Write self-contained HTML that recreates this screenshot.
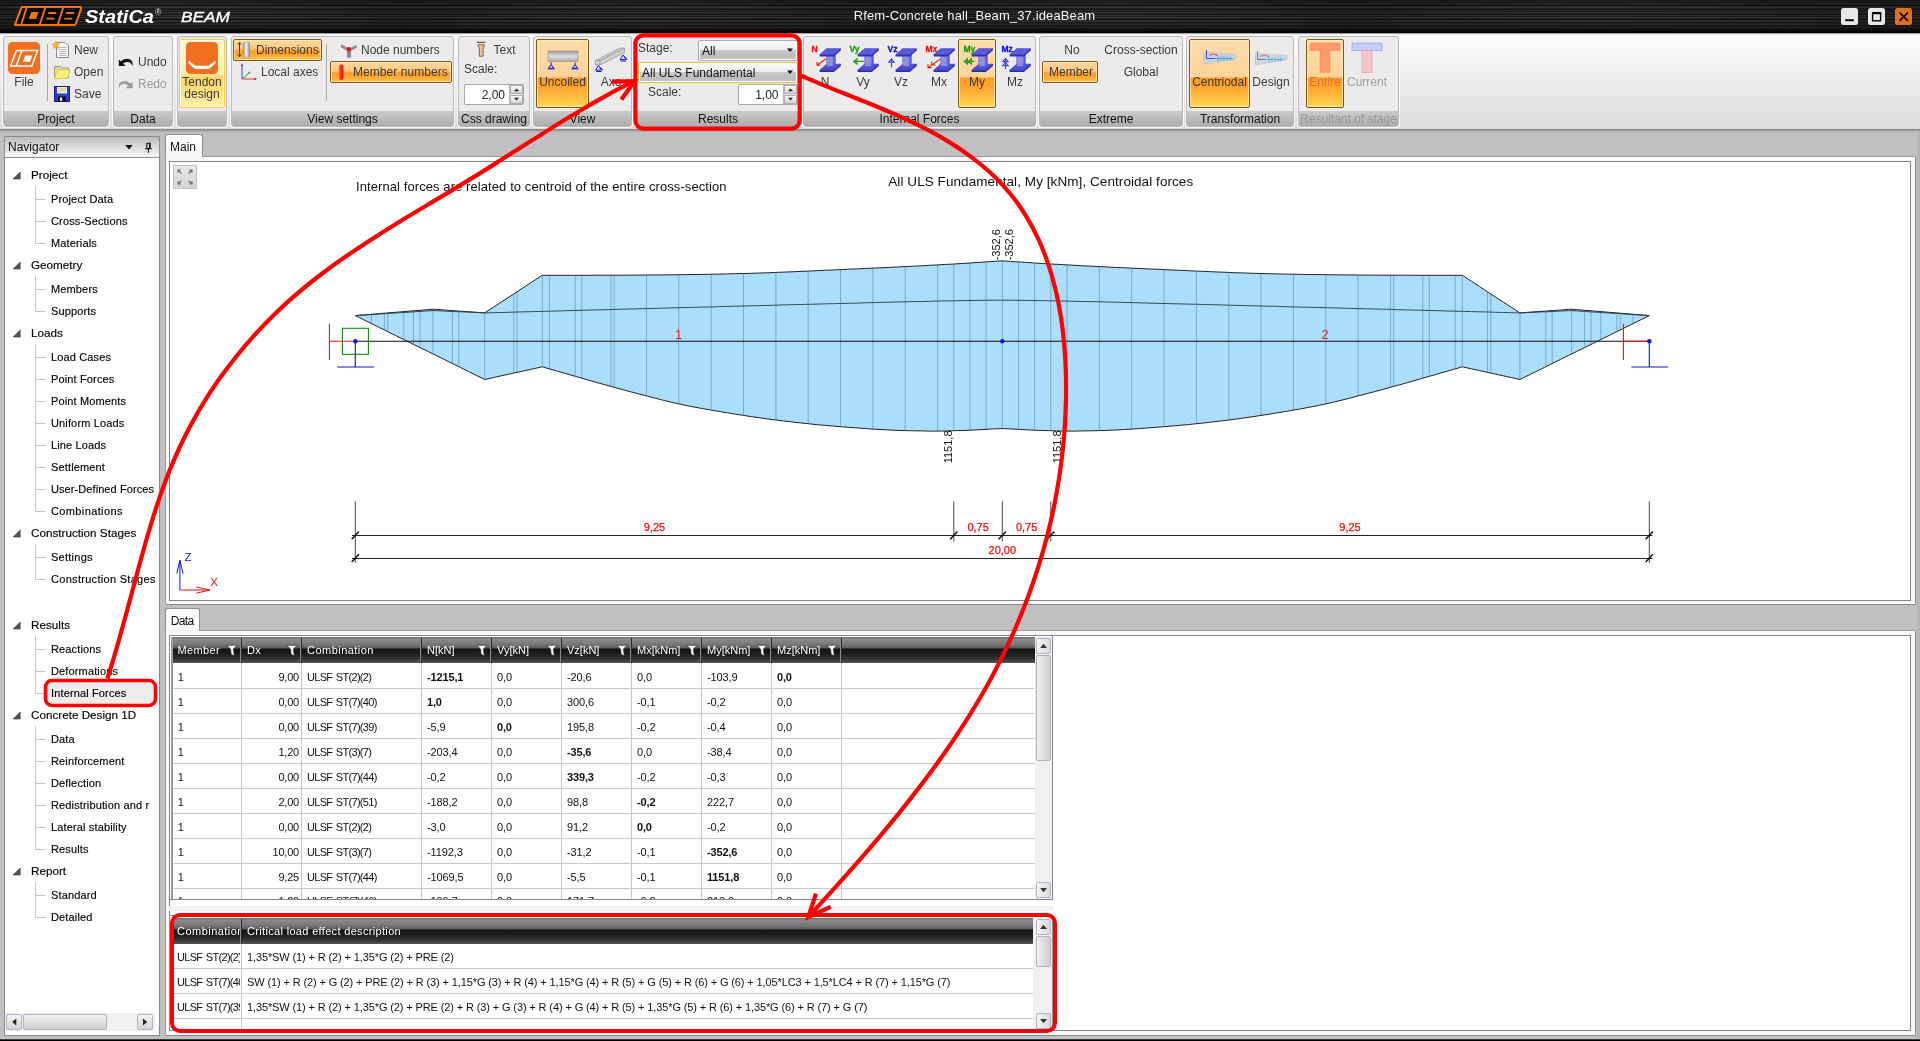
<!DOCTYPE html>
<html lang="en"><head><meta charset="utf-8"><title>IDEA StatiCa BEAM</title>
<style>
*{box-sizing:border-box;margin:0;padding:0}
html,body{width:1920px;height:1041px;overflow:hidden}
body{position:relative;will-change:transform;background:#c0c0c0;font-family:"Liberation Sans",sans-serif;font-size:12px;color:#1a1a1a;}
.abs{position:absolute}
.t{position:absolute;white-space:pre;line-height:14px}
#titlebar{left:0;top:0;width:1920px;height:33px;background:#0b0b0b;
 background-image:linear-gradient(90deg,rgba(0,0,0,.25) 0,rgba(0,0,0,0) 9%,rgba(0,0,0,.22) 21%,rgba(0,0,0,.04) 34%,rgba(0,0,0,.25) 47%,rgba(0,0,0,0) 58%,rgba(0,0,0,.22) 70%,rgba(0,0,0,.04) 83%,rgba(0,0,0,.25) 100%),linear-gradient(180deg,#1a1a1a 0px,#1a1a1a 1px,#282828 1px,#282828 2px,#141414 2px,#141414 3px,#303030 3px,#303030 4px,#1e1e1e 4px,#1e1e1e 5px,#121212 5px,#121212 6px,#2a2a2a 6px,#2a2a2a 7px,#383838 7px,#383838 8px,#202020 8px,#202020 9px,#141414 9px,#141414 10px,#2e2e2e 10px,#2e2e2e 11px,#1a1a1a 11px,#1a1a1a 12px,#363636 12px,#363636 13px,#242424 13px,#242424 14px,#161616 14px,#161616 15px,#323232 15px,#323232 16px,#1e1e1e 16px,#1e1e1e 17px,#3a3a3a 17px,#3a3a3a 18px,#222222 18px,#222222 19px,#141414 19px,#141414 20px,#282828 20px,#282828 21px,#343434 21px,#343434 22px,#181818 22px,#181818 23px,#242424 23px,#242424 24px,#2c2c2c 24px,#2c2c2c 25px,#161616 25px,#161616 26px,#1e1e1e 26px,#1e1e1e 27px,#262626 27px,#262626 28px,#121212 28px,#121212 29px,#161616 29px,#161616 30px,#0c0c0c 30px,#0c0c0c 31px,#060606 31px,#060606 32px,#020202 32px,#020202 33px);}
#ribbon{left:0;top:33px;width:1920px;height:97px;background:linear-gradient(180deg,#fdfdfd 0,#f3f3f3 30%,#dcdcdc 100%);border-top:1px solid #a4a4a4;box-shadow:inset 0 1px 0 #ececec;border-bottom:1px solid #888}
#ribshadow{left:0;top:130px;width:1920px;height:2px;background:linear-gradient(180deg,#989898,#b4b4b4)}
.grp{position:absolute;top:36px;height:91px;background:#eceaea;border:1px solid #b9b9b9;border-radius:3px;box-shadow:0 0 0 1px #fafafa;}
.grp .lbl{position:absolute;left:0;right:0;bottom:0;height:15px;background:linear-gradient(180deg,#cbcbcb,#adadad);text-align:center;line-height:16px;font-size:12px;color:#111;border-radius:0 0 2px 2px;white-space:nowrap}
.hot{position:absolute;border:1px solid #7a5a1c;border-radius:2px;background:linear-gradient(180deg,#ffd9a0 0,#ffcf8e 48%,#ff9a22 52%,#ffb437 75%,#ffd75a 100%);box-shadow:inset 0 0 0 1px rgba(255,240,190,.7)}
.hot2{position:absolute;border:1px solid #7a5a1c;border-radius:2px;background:linear-gradient(180deg,#ffd9a0 0,#ffc77d 45%,#ff9a22 55%,#ffa930 75%,#ffc24b 100%);box-shadow:inset 0 0 0 1px rgba(255,240,190,.7)}
</style></head>
<body>
<div id="titlebar" class="abs"></div>
<svg class="abs" style="left:0;top:0" width="260" height="33" viewBox="0 0 260 33">
<g fill="none" stroke="#f27405" stroke-width="2" stroke-linejoin="round">
<path d="M21.6 7.1 H80 Q81.6 7.1 81.1 8.7 L76 23.3 Q75.4 24.9 73.8 24.9 H15 Z" fill="#050505"/>
<path d="M26.7 7.5 L21.2 24.5 M45.3 7.5 L39.8 24.5 M63.2 7.5 L57.7 24.5" stroke-width="1.9"/>
<path d="M48.3 13 h8 M46.5 18.7 h8 M66.1 13 h8 M64.3 18.7 h8" stroke-width="1.8" stroke-linejoin="miter"/>
</g>
<path d="M31.2 12.1 h7.3 l-2.4 7 h-7.3z" fill="#f27405"/>
<text x="85" y="22.5" font-family="Liberation Sans,sans-serif" font-size="18.5" font-weight="bold" font-style="italic" fill="#fff" textLength="69" lengthAdjust="spacingAndGlyphs">StatiCa</text>
<text x="155" y="14.5" font-family="Liberation Sans,sans-serif" font-size="8.5" fill="#d8d8d8">®</text>
<text x="181" y="21.8" font-family="Liberation Sans,sans-serif" font-size="15.5" font-style="italic" fill="#fff" stroke="#fff" stroke-width=".35" textLength="49" lengthAdjust="spacingAndGlyphs">BEAM</text>
</svg>
<div class="t" style="left:853px;top:8.3px;width:243px;text-align:center;font-size:13px;line-height:16px;color:#f4f4f4;letter-spacing:.13px">Rfem-Concrete hall_Beam_37.ideaBeam</div>
<svg class="abs" style="left:1838px;top:5px" width="80" height="24" viewBox="0 0 80 24">
<rect x="3" y="3" width="17" height="17" rx="2.5" fill="#e8e8e8"/><rect x="7" y="14.3" width="9" height="1.9" rx=".9" fill="#000"/>
<rect x="30" y="3" width="17" height="17" rx="2.5" fill="#e8e8e8"/><rect x="34.6" y="7.8" width="8" height="8" fill="none" stroke="#000" stroke-width="1.4"/><rect x="34" y="7.2" width="9.2" height="2" fill="#000"/>
<rect x="57" y="3" width="17" height="17" rx="2.5" fill="#e36f1e"/><path d="M61.5 7.5 l8.4 8.4 M69.9 7.5 l-8.4 8.4" stroke="#000" stroke-width="1.7" fill="none"/>
</svg>
<div id="ribbon" class="abs"></div><div id="ribshadow" class="abs"></div>
<div class="grp" style="left:3px;width:106px"><div class="lbl" style="">Project</div></div>
<div class="grp" style="left:113px;width:60px"><div class="lbl" style="">Data</div></div>
<div class="grp" style="left:177px;width:50px"><div class="lbl" style=""></div></div>
<div class="grp" style="left:231px;width:223px"><div class="lbl" style="">View settings</div></div>
<div class="grp" style="left:458px;width:72px"><div class="lbl" style="">Css drawing</div></div>
<div class="grp" style="left:533px;width:99px"><div class="lbl" style="">View</div></div>
<div class="grp" style="left:636px;width:164px"><div class="lbl" style="">Results</div></div>
<div class="grp" style="left:803px;width:233px"><div class="lbl" style="">Internal Forces</div></div>
<div class="grp" style="left:1039px;width:144px"><div class="lbl" style="">Extreme</div></div>
<div class="grp" style="left:1186px;width:108px"><div class="lbl" style="">Transformation</div></div>
<div class="grp" style="left:1298px;width:101px"><div class="lbl" style="color:#999">Resultant of stage</div></div>
<div class="abs" style="left:179px;top:39px;width:46px;height:69px;border:1px solid #ffc845;border-radius:2px;background:linear-gradient(180deg,#fff7cf 0,#ffeeb0 50%,#ffd563 55%,#ffe07d 75%,#fff3a8 100%);box-shadow:inset 0 0 0 1px #fffbe6"></div>
<div class="hot" style="left:536px;top:39px;width:53px;height:69px;background:linear-gradient(180deg,#ffdcab 0,#ffd399 55%,#ff9a22 57%,#ffab32 75%,#ffd654 100%)"></div>
<div class="hot" style="left:958px;top:39px;width:38px;height:69px;background:linear-gradient(180deg,#ffdcab 0,#ffd399 55%,#ff9a22 57%,#ffab32 75%,#ffd654 100%)"></div>
<div class="hot" style="left:1189px;top:39px;width:61px;height:69px;background:linear-gradient(180deg,#ffdcab 0,#ffd399 55%,#ff9a22 57%,#ffab32 75%,#ffd654 100%)"></div>
<div class="hot" style="left:1306px;top:39px;width:38px;height:69px;background:linear-gradient(180deg,#ffdcab 0,#ffd399 55%,#ff9a22 57%,#ffab32 75%,#ffd654 100%)"></div>
<div class="hot2" style="left:233px;top:39px;width:89px;height:22px"></div>
<div class="hot2" style="left:330px;top:61px;width:122px;height:22px"></div>
<div class="hot2" style="left:1042px;top:61px;width:56px;height:22px"></div>
<div class="abs" style="left:47px;top:44px;width:1px;height:57px;background:#a9a9a9"></div>
<div class="abs" style="left:326px;top:44px;width:1px;height:57px;background:#a9a9a9"></div>
<svg class="abs" style="left:6px;top:40px" width="100" height="66" viewBox="6 40 100 66">
<rect x="8" y="42" width="32" height="32" rx="4.5" fill="#f26f21"/>
<g fill="none" stroke="#fff" stroke-width="1.5" stroke-linejoin="miter">
<path d="M16.4 50.6 H37.6 L31.8 66 H10.6 Z"/>
<path d="M21.9 50.6 L16.1 66"/>
</g>
<path d="M25.2 55.6 h7.2 l-2.4 6.2 h-7.2z" fill="#fff"/>
<!-- New -->
<path d="M56.5 42.5 h8.5 l3.5 3.5 v11.5 h-12z" fill="#fdfdfd" stroke="#8a8a8a" stroke-width="1"/>
<path d="M58.5 47.5h8M58.5 49.5h8M58.5 51.5h8M58.5 53.5h8M58.5 55.5h8" stroke="#b8b8b8" stroke-width="1"/>
<path d="M56 41 l1.2 2.6 2.8 .3 -2.1 1.9 .6 2.8 -2.5-1.5 -2.5 1.5 .6-2.8 -2.1-1.9 2.8-.3z" fill="#ffb52e" stroke="#e88a10" stroke-width=".5"/>
<!-- Open -->
<path d="M54.5 66.5 h6 l1.5 1.5 h6.5 v10 h-14z" fill="#d8d4b8" stroke="#a09a78" stroke-width="1"/>
<path d="M57 70 h13 l-2.5 8.5 h-13z" fill="#fff176" stroke="#d4c24a" stroke-width=".8"/>
<!-- Save -->
<rect x="54.5" y="86.5" width="15" height="15" fill="#2a3bd8" stroke="#1a1a8c" stroke-width="1"/>
<rect x="57" y="87" width="10" height="6.5" fill="#f4f0d0"/>
<path d="M58 89h8M58 91h8" stroke="#c9b458" stroke-width=".8"/>
<rect x="58" y="96.5" width="8" height="5" fill="#111"/><rect x="60" y="97.5" width="2.2" height="3.5" fill="#e8e8e8"/>
</svg>
<div class="t" style="left:-36.0px;top:75px;width:120px;text-align:center;color:#3a3a3a;">File</div>
<div class="t" style="left:74px;top:42.5px;color:#3a3a3a;">New</div>
<div class="t" style="left:74px;top:64.5px;color:#3a3a3a;">Open</div>
<div class="t" style="left:74px;top:86.5px;color:#3a3a3a;">Save</div>
<svg class="abs" style="left:116px;top:52px" width="22" height="42" viewBox="116 52 22 42">
<path d="M118.8 66 v-6.6 l2.1 1.9 c3.6-3.4 8.2-3.2 10.6-.6 c1.2 1.4 1.4 3.2 1 5.3 c-.8-2.6-2.6-4-5-4.100 c-1.700 0-3 .5-4.200 1.500 l2.300 2.600z" fill="#151515"/>
<path d="M132.600 88.200 v-6.600 l-2.100 1.900 c-3.600-3.400-8.200-3.200-10.600-.6 c-1.200 1.400-1.400 3.200-1 5.300 c.8-2.600 2.600-4 5-4.100 c1.700 0 3 .5 4.200 1.500 l-2.300 2.600z" fill="#9c9c9c"/>
</svg>
<div class="t" style="left:138px;top:54.5px;color:#3a3a3a;">Undo</div>
<div class="t" style="left:138px;top:76.5px;color:#9a9a9a;">Redo</div>
<svg class="abs" style="left:186px;top:42px" width="32" height="32" viewBox="0 0 32 32">
<rect x="0" y="0" width="32" height="32" rx="4.5" fill="#f26f21"/>
<path d="M2.5 18.5 L9.5 23.8 H22.5 L29.5 18.5 V21.5 L23 27 H9 L2.5 21.5Z" fill="#fff"/>
</svg>
<div class="t" style="left:142.0px;top:75px;width:120px;text-align:center;color:#3a3a3a;">Tendon</div>
<div class="t" style="left:142.0px;top:87px;width:120px;text-align:center;color:#3a3a3a;">design</div>
<svg class="abs" style="left:234px;top:40px" width="130" height="44" viewBox="234 40 130 44">
<defs><linearGradient id="cyl" x1="0" x2="1" y1="0" y2="0"><stop offset="0" stop-color="#9a9a9a"/><stop offset=".45" stop-color="#f4f4f4"/><stop offset="1" stop-color="#8a8a8a"/></linearGradient>
<linearGradient id="redcyl" x1="0" x2="1" y1="0" y2="0"><stop offset="0" stop-color="#ff6a5a"/><stop offset=".5" stop-color="#ff2a1a"/><stop offset="1" stop-color="#c81200"/></linearGradient></defs>
<path d="M239.5 42.5 v14 M237.8 44.5 l1.7-2.2 1.7 2.2 M237.8 54.5 l1.7 2.2 1.7-2.2" stroke="#333" stroke-width=".9" fill="none"/>
<rect x="243.3" y="42.3" width="6.4" height="15" rx="1.2" fill="url(#cyl)" stroke="#8c8c8c" stroke-width=".5"/>
<!-- local axes -->
<path d="M242 64.5 v14.5" stroke="#3a3af0" stroke-width="1"/><path d="M242 79 h14" stroke="#f03030" stroke-width="1"/><path d="M242 79 l7.5-6.5" stroke="#20a030" stroke-width="1"/>
<path d="M254.5 77.5 l2.6 1.5 -2.6 1.5z" fill="#f03030"/><path d="M240.8 66 l1.2-2.4 1.2 2.4z" fill="#3a3af0"/><path d="M248 72.3 l2.4-.8 -.8 2.4z" fill="#20a030"/>
<!-- node numbers -->
<path d="M341 44 l8 4.5 7.5-3.8 v3.2 l-5.5 2.8 v7 h-4 v-7 l-6-3.4z" fill="#8a8a9a"/>
<circle cx="348.8" cy="49.2" r="2.2" fill="#f01010"/>
<!-- member numbers -->
<rect x="338.8" y="64.5" width="4.6" height="15.5" rx="2.2" fill="url(#redcyl)"/>
</svg>
<div class="t" style="left:256px;top:42.5px;color:#3a3a3a;">Dimensions</div>
<div class="t" style="left:261px;top:64.5px;color:#3a3a3a;">Local axes</div>
<div class="t" style="left:361px;top:42.5px;color:#3a3a3a;">Node numbers</div>
<div class="t" style="left:353px;top:64.5px;color:#3a3a3a;letter-spacing:.05px;">Member numbers</div>
<svg class="abs" style="left:474px;top:40px" width="16" height="20" viewBox="474 40 16 20">
<path d="M477 42.3 h8.4" stroke="#333" stroke-width="1"/>
<path d="M478 44.8 h6.4 v1.6 l-1.3 1 v8.8 h-3.8 v-8.8 l-1.3-1z" fill="#f2c88a" stroke="#5a4a30" stroke-width=".8"/>
</svg>
<div class="t" style="left:493.5px;top:42.5px;color:#3a3a3a;">Text</div>
<div class="t" style="left:464px;top:62px;color:#3a3a3a;">Scale:</div>
<div class="abs" style="left:464px;top:83.5px;width:60px;height:21px;background:#fff;border:1px solid #a8a8a8;border-radius:2px"></div>
<div class="abs" style="left:509px;top:84.5px;width:14px;height:19px;background:#e9e9e9;border-left:1px solid #b8b8b8"></div>
<div class="abs" style="left:510px;top:84.5px;width:13px;height:9px;background:linear-gradient(180deg,#fafafa,#d2d2d2);border:1px solid #b0b0b0"></div>
<div class="abs" style="left:510px;top:94.5px;width:13px;height:9px;background:linear-gradient(180deg,#fafafa,#d2d2d2);border:1px solid #b0b0b0"></div>
<svg class="abs" style="left:510px;top:84.5px" width="13" height="19" viewBox="0 0 13 19"><path d="M4 6.2 l2.5-2.6 2.5 2.6z M4 12.8 l2.5 2.6 2.5-2.6z" fill="#222"/></svg>
<div class="t" style="left:464px;top:87.5px;width:41px;text-align:right;color:#222">2,00</div>
<svg class="abs" style="left:540px;top:44px" width="92" height="32" viewBox="540 44 92 32">
<defs><linearGradient id="bm" x1="0" x2="0" y1="0" y2="1"><stop offset="0" stop-color="#9c9c9c"/><stop offset=".5" stop-color="#dedede"/><stop offset="1" stop-color="#a8a8a8"/></linearGradient></defs>
<rect x="548" y="51" width="30" height="10.5" fill="url(#bm)" stroke="#8a8a8a" stroke-width=".6"/>
<g fill="none" stroke="#1818e8" stroke-width="1"><path d="M551.2 62.5 v2.2 l-2.7 3.4 h5.4 l-2.7-3.4 M547.8 68.9 h6.9"/><path d="M575 62.5 v2.2 l-2.7 3.4 h5.4 l-2.7-3.4 M571.6 68.9 h6.9"/></g>
<path d="M595.5 60.5 l24.5-12.5 h4.5 v4.5 l-24.5 12.5 h-4.5z" fill="#d0d0d0" stroke="#8e8e8e" stroke-width=".7"/>
<path d="M595.5 60.5 h4.5 l24.5-12.5 M600 60.5 v4.5" fill="none" stroke="#8e8e8e" stroke-width=".7"/>
<g fill="none" stroke="#1818e8" stroke-width="1"><path d="M598.5 65.5 l-3 4.6 h6z M596 71.5 h5.6 M599.5 67 l3.5 3"/><path d="M623 55 l-3 4.6 h6z M620.5 61 h5.6 M624 56.5 l3.5 3"/></g>
</svg>
<div class="t" style="left:502.5px;top:75px;width:120px;text-align:center;color:#3a3a3a;">Uncoiled</div>
<div class="t" style="left:551.0px;top:75px;width:120px;text-align:center;color:#3a3a3a;">Axo</div>
<div class="t" style="left:638px;top:41px;color:#3a3a3a;">Stage:</div>
<div class="abs" style="left:698px;top:39.5px;width:99.5px;height:21px;border:1px solid #a8a8a8;border-radius:2px;background:linear-gradient(180deg,#fafafa 0,#ededed 45%,#c9c9c9 50%,#bdbdbd 80%,#c8c8c8 100%);box-shadow:inset 0 0 0 1px #fff"></div>
<svg class="abs" style="left:785.5px;top:47.5px" width="8" height="5" viewBox="0 0 8 5"><path d="M1 .5 h6 l-3 3.6z" fill="#111"/></svg>
<div class="t" style="left:702px;top:43.5px;color:#111">All</div>
<div class="abs" style="left:638px;top:61.5px;width:159.5px;height:21px;border:1px solid #f5bf2a;border-radius:2px;background:linear-gradient(180deg,#fafafa 0,#ededed 45%,#c9c9c9 50%,#bdbdbd 80%,#c8c8c8 100%);box-shadow:inset 0 0 0 1px #fff"></div>
<svg class="abs" style="left:785.5px;top:69.5px" width="8" height="5" viewBox="0 0 8 5"><path d="M1 .5 h6 l-3 3.6z" fill="#111"/></svg>
<div class="t" style="left:642px;top:65.5px;color:#111">All ULS Fundamental</div>
<div class="t" style="left:648px;top:85px;color:#3a3a3a;">Scale:</div>
<div class="abs" style="left:738px;top:83.5px;width:59.5px;height:21px;background:#fff;border:1px solid #a8a8a8;border-radius:2px"></div>
<div class="abs" style="left:782.5px;top:84.5px;width:14px;height:19px;background:#e9e9e9;border-left:1px solid #b8b8b8"></div>
<div class="abs" style="left:783.5px;top:84.5px;width:13px;height:9px;background:linear-gradient(180deg,#fafafa,#d2d2d2);border:1px solid #b0b0b0"></div>
<div class="abs" style="left:783.5px;top:94.5px;width:13px;height:9px;background:linear-gradient(180deg,#fafafa,#d2d2d2);border:1px solid #b0b0b0"></div>
<svg class="abs" style="left:783.5px;top:84.5px" width="13" height="19" viewBox="0 0 13 19"><path d="M4 6.2 l2.5-2.6 2.5 2.6z M4 12.8 l2.5 2.6 2.5-2.6z" fill="#222"/></svg>
<div class="t" style="left:738px;top:87.5px;width:40.5px;text-align:right;color:#222">1,00</div>
<svg class="abs" style="left:803px;top:39px" width="233" height="40" viewBox="803 39 233 40"><path d="M826.7 64.2 h14.1 l-7 6 h-14.1z" fill="#4e4ed6" stroke="#2222a8" stroke-width=".6"/><path d="M819.7 70.2 h14.1 l7-6 v1.8 l-7 6 h-14.1z" fill="#2a2ab0"/><path d="M826.7 55.5 h6.6 v11 h-6.6z" fill="#9090e0" stroke="#4a4ac8" stroke-width=".5"/><path d="M833.3 55.5 l2.4-2 v11 l-2.4 2z" fill="#5c5cd0"/><path d="M826.7 48.7 h14.1 l-7 6 h-14.1z" fill="#5a5ade" stroke="#2a2ab4" stroke-width=".6"/><path d="M819.7 54.7 h14.1 l7-6 v1.8 l-7 6 h-14.1z" fill="#2e2eb8"/><path d="M864.7 64.2 h14.1 l-7 6 h-14.1z" fill="#4e4ed6" stroke="#2222a8" stroke-width=".6"/><path d="M857.7 70.2 h14.1 l7-6 v1.8 l-7 6 h-14.1z" fill="#2a2ab0"/><path d="M864.7 55.5 h6.6 v11 h-6.6z" fill="#9090e0" stroke="#4a4ac8" stroke-width=".5"/><path d="M871.3 55.5 l2.4-2 v11 l-2.4 2z" fill="#5c5cd0"/><path d="M864.7 48.7 h14.1 l-7 6 h-14.1z" fill="#5a5ade" stroke="#2a2ab4" stroke-width=".6"/><path d="M857.7 54.7 h14.1 l7-6 v1.8 l-7 6 h-14.1z" fill="#2e2eb8"/><path d="M902.7 64.2 h14.1 l-7 6 h-14.1z" fill="#4e4ed6" stroke="#2222a8" stroke-width=".6"/><path d="M895.7 70.2 h14.1 l7-6 v1.8 l-7 6 h-14.1z" fill="#2a2ab0"/><path d="M902.7 55.5 h6.6 v11 h-6.6z" fill="#9090e0" stroke="#4a4ac8" stroke-width=".5"/><path d="M909.3 55.5 l2.4-2 v11 l-2.4 2z" fill="#5c5cd0"/><path d="M902.7 48.7 h14.1 l-7 6 h-14.1z" fill="#5a5ade" stroke="#2a2ab4" stroke-width=".6"/><path d="M895.7 54.7 h14.1 l7-6 v1.8 l-7 6 h-14.1z" fill="#2e2eb8"/><path d="M940.7 64.2 h14.1 l-7 6 h-14.1z" fill="#4e4ed6" stroke="#2222a8" stroke-width=".6"/><path d="M933.7 70.2 h14.1 l7-6 v1.8 l-7 6 h-14.1z" fill="#2a2ab0"/><path d="M940.7 55.5 h6.6 v11 h-6.6z" fill="#9090e0" stroke="#4a4ac8" stroke-width=".5"/><path d="M947.3 55.5 l2.4-2 v11 l-2.4 2z" fill="#5c5cd0"/><path d="M940.7 48.7 h14.1 l-7 6 h-14.1z" fill="#5a5ade" stroke="#2a2ab4" stroke-width=".6"/><path d="M933.7 54.7 h14.1 l7-6 v1.8 l-7 6 h-14.1z" fill="#2e2eb8"/><path d="M978.7 64.2 h14.1 l-7 6 h-14.1z" fill="#4e4ed6" stroke="#2222a8" stroke-width=".6"/><path d="M971.7 70.2 h14.1 l7-6 v1.8 l-7 6 h-14.1z" fill="#2a2ab0"/><path d="M978.7 55.5 h6.6 v11 h-6.6z" fill="#9090e0" stroke="#4a4ac8" stroke-width=".5"/><path d="M985.3 55.5 l2.4-2 v11 l-2.4 2z" fill="#5c5cd0"/><path d="M978.7 48.7 h14.1 l-7 6 h-14.1z" fill="#5a5ade" stroke="#2a2ab4" stroke-width=".6"/><path d="M971.7 54.7 h14.1 l7-6 v1.8 l-7 6 h-14.1z" fill="#2e2eb8"/><path d="M1016.7 64.2 h14.1 l-7 6 h-14.1z" fill="#4e4ed6" stroke="#2222a8" stroke-width=".6"/><path d="M1009.7 70.2 h14.1 l7-6 v1.8 l-7 6 h-14.1z" fill="#2a2ab0"/><path d="M1016.7 55.5 h6.6 v11 h-6.6z" fill="#9090e0" stroke="#4a4ac8" stroke-width=".5"/><path d="M1023.3 55.5 l2.4-2 v11 l-2.4 2z" fill="#5c5cd0"/><path d="M1016.7 48.7 h14.1 l-7 6 h-14.1z" fill="#5a5ade" stroke="#2a2ab4" stroke-width=".6"/><path d="M1009.7 54.7 h14.1 l7-6 v1.8 l-7 6 h-14.1z" fill="#2e2eb8"/><g fill="none" stroke-width="1.1"><path d="M826 58.8 l-9 6.5 M817 62 v3.3 h3.6" stroke="#f01818"/><path d="M864 61.4 h-10.5 M857 58.7 l-3.4 2.7 3.4 2.7z" stroke="#18a018"/><path d="M891.5 67.5 v-8.5 M888.8 62.2 l2.7-3.3 2.7 3.3z" stroke="#4040f0"/><path d="M940 59.2 l-12 8.4 M928 64.2 v3.4 h3.6 M931.8 61.6 v3.4 h3.6" stroke="#f01818"/><path d="M974.5 61.4 h-11 M967.5 58.7 l-3.3 2.7 3.3 2.7z M971.5 58.7 l-3.3 2.7 3.3 2.7z" stroke="#18a018"/><path d="M1005.5 69 v-10.5 M1002.8 61.6 l2.7-3.3 2.7 3.3z M1002.8 65.6 l2.7-3.3 2.7 3.3z" stroke="#4040f0"/></g><text x="811.5" y="51.5" font-family="Liberation Sans,sans-serif" font-size="8.5" font-weight="bold" fill="#f01010" stroke="#f01010" stroke-width=".3">N</text><text x="849.5" y="51.5" font-family="Liberation Sans,sans-serif" font-size="8.5" font-weight="bold" fill="#10a010" stroke="#10a010" stroke-width=".3">Vy</text><text x="887.5" y="51.5" font-family="Liberation Sans,sans-serif" font-size="8.5" font-weight="bold" fill="#1010f0" stroke="#1010f0" stroke-width=".3">Vz</text><text x="925.5" y="51.5" font-family="Liberation Sans,sans-serif" font-size="8.5" font-weight="bold" fill="#f01010" stroke="#f01010" stroke-width=".3">Mx</text><text x="963.5" y="51.5" font-family="Liberation Sans,sans-serif" font-size="8.5" font-weight="bold" fill="#10a010" stroke="#10a010" stroke-width=".3">My</text><text x="1001.5" y="51.5" font-family="Liberation Sans,sans-serif" font-size="8.5" font-weight="bold" fill="#1010f0" stroke="#1010f0" stroke-width=".3">Mz</text></svg>
<div class="t" style="left:795.0px;top:75px;width:60px;text-align:center;color:#3a3a3a;">N</div>
<div class="t" style="left:833.0px;top:75px;width:60px;text-align:center;color:#3a3a3a;">Vy</div>
<div class="t" style="left:871.0px;top:75px;width:60px;text-align:center;color:#3a3a3a;">Vz</div>
<div class="t" style="left:909.0px;top:75px;width:60px;text-align:center;color:#3a3a3a;">Mx</div>
<div class="t" style="left:947.0px;top:75px;width:60px;text-align:center;color:#3a3a3a;">My</div>
<div class="t" style="left:985.0px;top:75px;width:60px;text-align:center;color:#3a3a3a;">Mz</div>
<div class="t" style="left:1012.0px;top:42.5px;width:120px;text-align:center;color:#3a3a3a;">No</div>
<div class="t" style="left:1011.0px;top:64.5px;width:120px;text-align:center;color:#3a3a3a;">Member</div>
<div class="t" style="left:1081.0px;top:42.5px;width:120px;text-align:center;color:#3a3a3a;">Cross-section</div>
<div class="t" style="left:1081.0px;top:64.5px;width:120px;text-align:center;color:#3a3a3a;">Global</div>
<svg class="abs" style="left:1186px;top:39px" width="108" height="40" viewBox="1186 39 108 40"><g opacity="1"><path d="M1204 52 l32 2.5 v4.5 l-32 5z" fill="#c8d4dc" stroke="#a8b4bc" stroke-width=".5"/><path d="M1207 58.5 h26" stroke="#28b8e8" stroke-width="1"/><path d="M1206.5 50 v8.5 h8" stroke="#4040f0" stroke-width=".9" fill="none"/><path d="M1209 55.5 q4-3 9 0" stroke="#f03030" stroke-width=".9" fill="none"/><path d="M1218 55.5 v6 M1221 55.8 v5.4 M1224 56 v5 M1227 56.2 v4.4 M1230 56.5 v3.8" stroke="#6a8ad8" stroke-width=".8"/></g><g opacity="0.8"><path d="M1255 53 l32 2.5 v4.5 l-32 5z" fill="#c8d4dc" stroke="#a8b4bc" stroke-width=".5"/><path d="M1258 59.5 h26" stroke="#28b8e8" stroke-width="1"/><path d="M1257.5 51 v8.5 h8" stroke="#4040f0" stroke-width=".9" fill="none"/><path d="M1260 56.5 q4-3 9 0" stroke="#f03030" stroke-width=".9" fill="none"/><path d="M1269 56.5 v6 M1272 56.8 v5.4 M1275 57 v5 M1278 57.2 v4.4 M1281 57.5 v3.8" stroke="#6a8ad8" stroke-width=".8"/></g></svg>
<div class="t" style="left:1184.5px;top:75px;width:70px;text-align:center;color:#3a3a3a;">Centriodal</div>
<div class="t" style="left:1241.0px;top:75px;width:60px;text-align:center;color:#3a3a3a;">Design</div>
<svg class="abs" style="left:1300px;top:39px" width="96" height="40" viewBox="1300 39 96 40">
<rect x="1310" y="43" width="30" height="7.5" fill="#ff9a6a" stroke="#ff8a5a" stroke-width=".6"/><rect x="1320" y="50.5" width="10" height="22" fill="#ff9a6a" stroke="#ff8a5a" stroke-width=".6"/>
<path d="M1325 43 v29.5" stroke="#ffb898" stroke-width=".6" stroke-dasharray="1 1"/>
<rect x="1352" y="43" width="30" height="7.5" fill="#c6cef6" stroke="#9aa8f0" stroke-width=".8"/><rect x="1362" y="50.5" width="10" height="22" fill="#f6c6cc" stroke="#f0a0aa" stroke-width=".8"/>
<path d="M1367 43 v29.5" stroke="#f0a0aa" stroke-width=".6" stroke-dasharray="1 1"/>
</svg>
<div class="t" style="left:1295.0px;top:75px;width:60px;text-align:center;color:#d9762e;">Entire</div>
<div class="t" style="left:1337.0px;top:75px;width:60px;text-align:center;color:#a0a0a0;">Current</div>
<div class="abs" style="left:4px;top:136px;width:156px;height:900px;background:#fff;border:1px solid #8c8c8c"></div>
<div class="abs" style="left:5px;top:137px;width:154px;height:21px;background:linear-gradient(180deg,#bcbcbc 0,#dcdcdc 50%,#f6f6f6 100%);border-bottom:1px solid #8c8c8c"></div>
<div class="t" style="left:8px;top:139.5px;color:#111">Navigator</div>
<svg class="abs" style="left:120px;top:138px" width="38" height="18" viewBox="120 138 38 18"><path d="M125.3 145 h7.4 l-3.7 4.4z" fill="#111"/><path d="M146.8 143.3 h3.4 v5.2 h-3.4z M149.6 143.3 v5.2 M145 148.8 h6.8 M148.4 148.8 v4" stroke="#111" stroke-width="1.1" fill="none"/></svg>
<div class="abs" style="left:46px;top:681px;width:108px;height:23px;background:#ededed"></div>
<svg class="abs" style="left:5px;top:158px" width="154" height="780" viewBox="5 158 154 780"><path d="M35.5 186 V243.5" stroke="#c4c4c4" stroke-width="1" fill="none"/><path d="M13.2 179 h7 v-7z" fill="#555" stroke="#333" stroke-width=".6"/><path d="M35.5 276 V311.5" stroke="#c4c4c4" stroke-width="1" fill="none"/><path d="M13.2 269 h7 v-7z" fill="#555" stroke="#333" stroke-width=".6"/><path d="M35.5 344 V511.5" stroke="#c4c4c4" stroke-width="1" fill="none"/><path d="M13.2 337 h7 v-7z" fill="#555" stroke="#333" stroke-width=".6"/><path d="M35.5 544 V579.5" stroke="#c4c4c4" stroke-width="1" fill="none"/><path d="M13.2 537 h7 v-7z" fill="#555" stroke="#333" stroke-width=".6"/><path d="M35.5 636 V693.5" stroke="#c4c4c4" stroke-width="1" fill="none"/><path d="M13.2 629 h7 v-7z" fill="#555" stroke="#333" stroke-width=".6"/><path d="M35.5 726 V849.5" stroke="#c4c4c4" stroke-width="1" fill="none"/><path d="M13.2 719 h7 v-7z" fill="#555" stroke="#333" stroke-width=".6"/><path d="M35.5 882 V917.5" stroke="#c4c4c4" stroke-width="1" fill="none"/><path d="M13.2 875 h7 v-7z" fill="#555" stroke="#333" stroke-width=".6"/><path d="M35.5 199.5 H46" stroke="#c4c4c4" stroke-width="1" fill="none"/><path d="M35.5 221.5 H46" stroke="#c4c4c4" stroke-width="1" fill="none"/><path d="M35.5 243.5 H46" stroke="#c4c4c4" stroke-width="1" fill="none"/><path d="M35.5 289.5 H46" stroke="#c4c4c4" stroke-width="1" fill="none"/><path d="M35.5 311.5 H46" stroke="#c4c4c4" stroke-width="1" fill="none"/><path d="M35.5 357.5 H46" stroke="#c4c4c4" stroke-width="1" fill="none"/><path d="M35.5 379.5 H46" stroke="#c4c4c4" stroke-width="1" fill="none"/><path d="M35.5 401.5 H46" stroke="#c4c4c4" stroke-width="1" fill="none"/><path d="M35.5 423.5 H46" stroke="#c4c4c4" stroke-width="1" fill="none"/><path d="M35.5 445.5 H46" stroke="#c4c4c4" stroke-width="1" fill="none"/><path d="M35.5 467.5 H46" stroke="#c4c4c4" stroke-width="1" fill="none"/><path d="M35.5 489.5 H46" stroke="#c4c4c4" stroke-width="1" fill="none"/><path d="M35.5 511.5 H46" stroke="#c4c4c4" stroke-width="1" fill="none"/><path d="M35.5 557.5 H46" stroke="#c4c4c4" stroke-width="1" fill="none"/><path d="M35.5 579.5 H46" stroke="#c4c4c4" stroke-width="1" fill="none"/><path d="M35.5 649.5 H46" stroke="#c4c4c4" stroke-width="1" fill="none"/><path d="M35.5 671.5 H46" stroke="#c4c4c4" stroke-width="1" fill="none"/><path d="M35.5 693.5 H46" stroke="#c4c4c4" stroke-width="1" fill="none"/><path d="M35.5 739.5 H46" stroke="#c4c4c4" stroke-width="1" fill="none"/><path d="M35.5 761.5 H46" stroke="#c4c4c4" stroke-width="1" fill="none"/><path d="M35.5 783.5 H46" stroke="#c4c4c4" stroke-width="1" fill="none"/><path d="M35.5 805.5 H46" stroke="#c4c4c4" stroke-width="1" fill="none"/><path d="M35.5 827.5 H46" stroke="#c4c4c4" stroke-width="1" fill="none"/><path d="M35.5 849.5 H46" stroke="#c4c4c4" stroke-width="1" fill="none"/><path d="M35.5 895.5 H46" stroke="#c4c4c4" stroke-width="1" fill="none"/><path d="M35.5 917.5 H46" stroke="#c4c4c4" stroke-width="1" fill="none"/></svg>
<div class="t" style="left:31px;top:168px;color:#000;font-size:11.7px;width:125px;overflow:hidden;-webkit-text-stroke:.15px #000">Project</div>
<div class="t" style="left:51px;top:192px;color:#000;font-size:11px;letter-spacing:0.14px;width:103.5px;overflow:hidden;-webkit-text-stroke:.15px #000">Project Data</div>
<div class="t" style="left:51px;top:214px;color:#000;font-size:11px;letter-spacing:0.14px;width:103.5px;overflow:hidden;-webkit-text-stroke:.15px #000">Cross-Sections</div>
<div class="t" style="left:51px;top:236px;color:#000;font-size:11px;letter-spacing:0.14px;width:103.5px;overflow:hidden;-webkit-text-stroke:.15px #000">Materials</div>
<div class="t" style="left:31px;top:258px;color:#000;font-size:11.7px;width:125px;overflow:hidden;-webkit-text-stroke:.15px #000">Geometry</div>
<div class="t" style="left:51px;top:282px;color:#000;font-size:11px;letter-spacing:0.14px;width:103.5px;overflow:hidden;-webkit-text-stroke:.15px #000">Members</div>
<div class="t" style="left:51px;top:304px;color:#000;font-size:11px;letter-spacing:0.14px;width:103.5px;overflow:hidden;-webkit-text-stroke:.15px #000">Supports</div>
<div class="t" style="left:31px;top:326px;color:#000;font-size:11.7px;width:125px;overflow:hidden;-webkit-text-stroke:.15px #000">Loads</div>
<div class="t" style="left:51px;top:350px;color:#000;font-size:11px;letter-spacing:0.14px;width:103.5px;overflow:hidden;-webkit-text-stroke:.15px #000">Load Cases</div>
<div class="t" style="left:51px;top:372px;color:#000;font-size:11px;letter-spacing:0.14px;width:103.5px;overflow:hidden;-webkit-text-stroke:.15px #000">Point Forces</div>
<div class="t" style="left:51px;top:394px;color:#000;font-size:11px;letter-spacing:0.14px;width:103.5px;overflow:hidden;-webkit-text-stroke:.15px #000">Point Moments</div>
<div class="t" style="left:51px;top:416px;color:#000;font-size:11px;letter-spacing:0.14px;width:103.5px;overflow:hidden;-webkit-text-stroke:.15px #000">Uniform Loads</div>
<div class="t" style="left:51px;top:438px;color:#000;font-size:11px;letter-spacing:0.14px;width:103.5px;overflow:hidden;-webkit-text-stroke:.15px #000">Line Loads</div>
<div class="t" style="left:51px;top:460px;color:#000;font-size:11px;letter-spacing:0.14px;width:103.5px;overflow:hidden;-webkit-text-stroke:.15px #000">Settlement</div>
<div class="t" style="left:51px;top:482px;color:#000;font-size:11px;letter-spacing:0.08px;width:103.5px;overflow:hidden;-webkit-text-stroke:.15px #000">User-Defined Forces</div>
<div class="t" style="left:51px;top:504px;color:#000;font-size:11px;letter-spacing:0.38px;width:103.5px;overflow:hidden;-webkit-text-stroke:.15px #000">Combinations</div>
<div class="t" style="left:31px;top:526px;color:#000;font-size:11.7px;width:125px;overflow:hidden;-webkit-text-stroke:.15px #000">Construction Stages</div>
<div class="t" style="left:51px;top:550px;color:#000;font-size:11px;letter-spacing:0.25px;width:103.5px;overflow:hidden;-webkit-text-stroke:.15px #000">Settings</div>
<div class="t" style="left:51px;top:572px;color:#000;font-size:11px;letter-spacing:0.3px;width:103.5px;overflow:hidden;-webkit-text-stroke:.15px #000">Construction Stages</div>
<div class="t" style="left:31px;top:618px;color:#000;font-size:11.7px;width:125px;overflow:hidden;-webkit-text-stroke:.15px #000">Results</div>
<div class="t" style="left:51px;top:642px;color:#000;font-size:11px;letter-spacing:0.14px;width:103.5px;overflow:hidden;-webkit-text-stroke:.15px #000">Reactions</div>
<div class="t" style="left:51px;top:664px;color:#000;font-size:11px;letter-spacing:0.14px;width:103.5px;overflow:hidden;-webkit-text-stroke:.15px #000">Deformations</div>
<div class="t" style="left:51px;top:686px;color:#000;font-size:11px;letter-spacing:0.14px;width:103.5px;overflow:hidden;-webkit-text-stroke:.15px #000">Internal Forces</div>
<div class="t" style="left:31px;top:708px;color:#000;font-size:11.7px;width:125px;overflow:hidden;-webkit-text-stroke:.15px #000">Concrete Design 1D</div>
<div class="t" style="left:51px;top:732px;color:#000;font-size:11px;letter-spacing:0.14px;width:103.5px;overflow:hidden;-webkit-text-stroke:.15px #000">Data</div>
<div class="t" style="left:51px;top:754px;color:#000;font-size:11px;letter-spacing:0.14px;width:103.5px;overflow:hidden;-webkit-text-stroke:.15px #000">Reinforcement</div>
<div class="t" style="left:51px;top:776px;color:#000;font-size:11px;letter-spacing:0.14px;width:103.5px;overflow:hidden;-webkit-text-stroke:.15px #000">Deflection</div>
<div class="t" style="left:51px;top:798px;color:#000;font-size:11px;letter-spacing:0.14px;width:103.5px;overflow:hidden;-webkit-text-stroke:.15px #000">Redistribution and r</div>
<div class="t" style="left:51px;top:820px;color:#000;font-size:11px;letter-spacing:0.14px;width:103.5px;overflow:hidden;-webkit-text-stroke:.15px #000">Lateral stability</div>
<div class="t" style="left:51px;top:842px;color:#000;font-size:11px;letter-spacing:0.14px;width:103.5px;overflow:hidden;-webkit-text-stroke:.15px #000">Results</div>
<div class="t" style="left:31px;top:864px;color:#000;font-size:11.7px;width:125px;overflow:hidden;-webkit-text-stroke:.15px #000">Report</div>
<div class="t" style="left:51px;top:888px;color:#000;font-size:11px;letter-spacing:0.14px;width:103.5px;overflow:hidden;-webkit-text-stroke:.15px #000">Standard</div>
<div class="t" style="left:51px;top:910px;color:#000;font-size:11px;letter-spacing:0.14px;width:103.5px;overflow:hidden;-webkit-text-stroke:.15px #000">Detailed</div>
<div class="abs" style="left:5px;top:1013px;width:150px;height:18px;background:#f0f0f0"></div>
<div class="abs" style="left:6px;top:1014px;width:16px;height:16px;background:linear-gradient(180deg,#f4f4f4,#d4d4d4);border:1px solid #a9b6c8;border-radius:2px"></div>
<div class="abs" style="left:137px;top:1014px;width:16px;height:16px;background:linear-gradient(180deg,#f4f4f4,#d4d4d4);border:1px solid #a9b6c8;border-radius:2px"></div>
<div class="abs" style="left:23px;top:1014px;width:84px;height:16px;background:linear-gradient(180deg,#f2f2f2,#d0d0d0);border:1px solid #b0b4ba;border-radius:2px"></div>
<svg class="abs" style="left:6px;top:1014px" width="148" height="16" viewBox="6 1014 148 16"><path d="M16.3 1018.5 v7 l-4.2-3.5z M143 1018.5 v7 l4.2-3.5z" fill="#222"/></svg>
<div class="abs" style="left:165px;top:134px;width:38px;height:23px;background:linear-gradient(180deg,#fff,#f6f6f6);border:1px solid #8e8e8e;border-bottom:none;border-radius:3px 3px 0 0"></div>
<div class="t" style="left:170px;top:139.5px;color:#111">Main</div>
<div class="abs" style="left:165px;top:156px;width:1751px;height:449px;background:#f8f8f8;border:1px solid #8a8a8a;border-top-color:#9a9a9a;border-left-color:#9c9c9c;border-radius:0 2px 2px 2px"></div>
<div class="abs" style="left:166px;top:156px;width:36px;height:2px;background:#f8f8f8"></div>
<div class="abs" style="left:169px;top:161px;width:1742px;height:440px;background:#fff;border:1px solid #868686"></div>
<div class="abs" style="left:173px;top:165px;width:24px;height:24px;background:linear-gradient(180deg,#e8e8e8,#d4d4d4);border:1px solid #c0c0c0"></div>
<svg class="abs" style="left:173px;top:165px" width="24" height="24" viewBox="0 0 24 24"><g stroke="#707070" stroke-width="1.1" fill="none"><path d="M5 5 l3.5 3.5 M5 8 v-3 h3 M19 5 l-3.5 3.5 M16 5 h3 v3 M5 19 l3.5-3.5 M5 16 v3 h3 M19 19 l-3.5-3.5 M19 16 v3 h-3"/></g></svg>
<div class="t" style="left:356px;top:178.6px;font-size:13px;line-height:16px;color:#111;letter-spacing:.085px">Internal forces are related to centroid of the entire cross-section</div>
<div class="t" style="left:888.3px;top:174.2px;font-size:13.5px;line-height:16px;color:#111;letter-spacing:.07px">All ULS Fundamental, My [kNm], Centroidal forces</div>
<svg class="abs" style="left:170px;top:162px" width="1741" height="438" viewBox="170 162 1741 438" font-family="Liberation Sans,sans-serif"><polygon points="355.3,315.6 363.4,314.9 371.5,314.3 379.6,313.6 384.4,313.2 387.7,312.9 395.7,312.3 403.8,311.6 411.9,310.9 413.5,310.8 420.0,310.3 428.1,309.6 432.9,309.2 436.2,309.4 444.3,310.0 452.4,310.6 458.8,311.1 460.4,311.2 468.5,311.7 476.6,312.3 484.7,312.9 492.8,307.6 500.9,302.3 509.0,297.1 513.8,293.9 517.0,291.8 525.1,286.5 533.2,281.2 541.3,275.9 542.3,275.3 549.4,275.3 557.5,275.3 565.6,275.3 573.7,275.3 575.3,275.3 581.8,275.3 589.8,275.3 597.9,275.2 606.0,275.2 610.9,275.2 614.1,275.2 622.2,275.2 630.3,275.1 638.4,275.1 646.5,275.0 654.5,274.9 662.6,274.9 670.7,274.8 678.8,274.7 686.9,274.6 695.0,274.5 703.1,274.4 711.2,274.2 719.2,274.1 727.3,273.9 735.4,273.7 743.5,273.5 751.6,273.3 759.7,273.0 767.8,272.8 775.9,272.4 783.9,272.1 792.0,271.8 800.1,271.4 808.2,271.1 816.3,270.7 824.4,270.3 832.5,270.0 840.5,269.6 848.6,269.2 856.7,268.9 864.8,268.5 872.9,268.1 881.0,267.8 889.1,267.4 897.2,267.0 905.2,266.6 913.3,266.2 921.4,265.8 929.5,265.3 937.6,264.9 945.7,264.4 953.8,264.0 961.9,263.5 970.0,263.0 978.0,262.4 986.1,261.9 994.2,261.4 1002.3,260.8 1010.4,261.4 1018.5,261.9 1026.6,262.4 1034.6,263.0 1042.7,263.5 1050.8,264.0 1058.9,264.4 1067.0,264.9 1075.1,265.3 1083.2,265.8 1091.3,266.2 1099.3,266.6 1107.4,267.0 1115.5,267.4 1123.6,267.8 1131.7,268.1 1139.8,268.5 1147.9,268.9 1156.0,269.2 1164.0,269.6 1172.1,270.0 1180.2,270.3 1188.3,270.7 1196.4,271.1 1204.5,271.4 1212.6,271.8 1220.7,272.1 1228.8,272.4 1236.8,272.8 1244.9,273.0 1253.0,273.3 1261.1,273.5 1269.2,273.7 1277.3,273.9 1285.4,274.1 1293.4,274.2 1301.5,274.4 1309.6,274.5 1317.7,274.6 1325.8,274.7 1333.9,274.8 1342.0,274.9 1350.1,274.9 1358.1,275.0 1366.2,275.1 1374.3,275.1 1382.4,275.2 1390.5,275.2 1393.7,275.2 1398.6,275.2 1406.7,275.2 1414.8,275.3 1422.8,275.3 1429.3,275.3 1430.9,275.3 1439.0,275.3 1447.1,275.3 1455.2,275.3 1462.3,275.3 1463.3,275.9 1471.4,281.2 1479.5,286.5 1487.5,291.8 1490.8,293.9 1495.6,297.1 1503.7,302.3 1511.8,307.6 1519.9,312.9 1528.0,312.3 1536.1,311.7 1544.2,311.2 1545.8,311.1 1552.2,310.6 1560.3,310.0 1568.4,309.4 1571.7,309.2 1576.5,309.6 1584.6,310.3 1591.1,310.8 1592.7,310.9 1600.8,311.6 1608.9,312.3 1616.9,312.9 1620.2,313.2 1625.0,313.6 1633.1,314.3 1641.2,314.9 1649.3,315.6 1649.3,315.6 1641.2,319.6 1633.1,323.6 1625.0,327.6 1620.2,330.0 1616.9,331.6 1608.9,335.6 1600.8,339.6 1592.7,343.6 1591.1,344.4 1584.6,347.6 1576.5,351.5 1571.7,353.9 1568.4,355.5 1560.3,359.5 1552.2,363.5 1545.8,366.7 1544.2,367.5 1536.1,371.5 1528.0,375.5 1519.9,379.5 1511.8,377.7 1503.7,375.9 1495.6,374.1 1490.8,373.1 1487.5,372.4 1479.5,370.6 1471.4,368.8 1463.3,367.0 1462.3,366.8 1455.2,368.9 1447.1,371.2 1439.0,373.5 1430.9,375.9 1429.3,376.3 1422.8,378.2 1414.8,380.5 1406.7,382.8 1398.6,385.1 1393.7,386.4 1390.5,387.3 1382.4,389.5 1374.3,391.7 1366.2,393.8 1358.1,395.9 1350.1,398.0 1342.0,400.1 1333.9,402.1 1325.8,403.9 1317.7,405.6 1309.6,407.2 1301.5,408.7 1293.4,410.1 1285.4,411.5 1277.3,412.8 1269.2,414.2 1261.1,415.4 1253.0,416.7 1244.9,417.8 1236.8,419.0 1228.8,420.0 1220.7,421.0 1212.6,421.9 1204.5,422.9 1196.4,423.7 1188.3,424.6 1180.2,425.3 1172.1,426.0 1164.0,426.7 1156.0,427.3 1147.9,427.9 1139.8,428.5 1131.7,429.1 1123.6,429.6 1115.5,430.0 1107.4,430.4 1099.3,430.6 1091.3,430.8 1083.2,430.9 1075.1,431.1 1067.0,431.1 1058.9,431.0 1050.8,430.7 1042.7,430.5 1034.6,430.2 1026.6,429.8 1018.5,429.3 1010.4,428.9 1002.3,428.6 994.2,428.9 986.1,429.3 978.0,429.8 970.0,430.2 961.9,430.5 953.8,430.7 945.7,431.0 937.6,431.1 929.5,431.1 921.4,430.9 913.3,430.8 905.2,430.6 897.2,430.4 889.1,430.0 881.0,429.6 872.9,429.1 864.8,428.5 856.7,427.9 848.6,427.3 840.5,426.7 832.5,426.0 824.4,425.3 816.3,424.6 808.2,423.7 800.1,422.9 792.0,421.9 783.9,421.0 775.9,420.0 767.8,419.0 759.7,417.8 751.6,416.7 743.5,415.4 735.4,414.2 727.3,412.8 719.2,411.5 711.2,410.1 703.1,408.7 695.0,407.2 686.9,405.6 678.8,403.9 670.7,402.1 662.6,400.1 654.5,398.0 646.5,395.9 638.4,393.8 630.3,391.7 622.2,389.5 614.1,387.3 610.9,386.4 606.0,385.1 597.9,382.8 589.8,380.5 581.8,378.2 575.3,376.3 573.7,375.9 565.6,373.5 557.5,371.2 549.4,368.9 542.3,366.8 541.3,367.0 533.2,368.8 525.1,370.6 517.0,372.4 513.8,373.1 509.0,374.1 500.9,375.9 492.8,377.7 484.7,379.5 476.6,375.5 468.5,371.5 460.4,367.5 458.8,366.7 452.4,363.5 444.3,359.5 436.2,355.5 432.9,353.9 428.1,351.5 420.0,347.6 413.5,344.4 411.9,343.6 403.8,339.6 395.7,335.6 387.7,331.6 384.4,330.0 379.6,327.6 371.5,323.6 363.4,319.6 355.3,315.6" fill="#abdefc" stroke="none"/><path d="M371.5 314.3V323.6M1633.1 314.3V323.6M384.4 313.2V330.0M1620.2 313.2V330.0M387.7 312.9V331.6M1616.9 312.9V331.6M403.8 311.6V339.6M1600.8 311.6V339.6M413.5 310.8V344.4M1591.1 310.8V344.4M420.0 310.3V347.6M1584.6 310.3V347.6M432.9 309.2V353.9M1571.7 309.2V353.9M452.4 310.6V363.5M1552.2 310.6V363.5M458.8 311.1V366.7M1545.8 311.1V366.7M484.7 312.9V379.5M1519.9 312.9V379.5M513.8 293.9V373.1M1490.8 293.9V373.1M517.0 291.8V372.4M1487.5 291.8V372.4M542.3 275.3V366.8M1462.3 275.3V366.8M549.4 275.3V368.9M1455.2 275.3V368.9M575.3 275.3V376.3M1429.3 275.3V376.3M581.8 275.3V378.2M1422.8 275.3V378.2M610.9 275.2V386.4M1393.7 275.2V386.4M614.1 275.2V387.3M1390.5 275.2V387.3M646.5 275.0V395.9M1358.1 275.0V395.9M678.8 274.7V403.9M1325.8 274.7V403.9M711.2 274.2V410.1M1293.4 274.2V410.1M743.5 273.5V415.4M1261.1 273.5V415.4M775.9 272.4V420.0M1228.8 272.4V420.0M808.2 271.1V423.7M1196.4 271.1V423.7M840.5 269.6V426.7M1164.0 269.6V426.7M872.9 268.1V429.1M1131.7 268.1V429.1M905.2 266.6V430.6M1099.3 266.6V430.6M937.6 264.9V431.1M1067.0 264.9V431.1M953.8 264.0V430.7M1050.8 264.0V430.7M970.0 263.0V430.2M1034.6 263.0V430.2M986.1 261.9V429.3M1018.5 261.9V429.3M1002.3 260.8V428.6" stroke="#6f9dbd" stroke-width=".8" fill="none"/><polyline points="355.3,315.6 363.4,314.9 371.5,314.3 379.6,313.6 384.4,313.2 387.7,312.9 395.7,312.3 403.8,311.6 411.9,310.9 413.5,310.8 420.0,310.3 428.1,309.6 432.9,309.2 436.2,309.4 444.3,310.0 452.4,310.6 458.8,311.1 460.4,311.2 468.5,311.7 476.6,312.3 484.7,312.9 492.8,307.6 500.9,302.3 509.0,297.1 513.8,293.9 517.0,291.8 525.1,286.5 533.2,281.2 541.3,275.9 542.3,275.3 549.4,275.3 557.5,275.3 565.6,275.3 573.7,275.3 575.3,275.3 581.8,275.3 589.8,275.3 597.9,275.2 606.0,275.2 610.9,275.2 614.1,275.2 622.2,275.2 630.3,275.1 638.4,275.1 646.5,275.0 654.5,274.9 662.6,274.9 670.7,274.8 678.8,274.7 686.9,274.6 695.0,274.5 703.1,274.4 711.2,274.2 719.2,274.1 727.3,273.9 735.4,273.7 743.5,273.5 751.6,273.3 759.7,273.0 767.8,272.8 775.9,272.4 783.9,272.1 792.0,271.8 800.1,271.4 808.2,271.1 816.3,270.7 824.4,270.3 832.5,270.0 840.5,269.6 848.6,269.2 856.7,268.9 864.8,268.5 872.9,268.1 881.0,267.8 889.1,267.4 897.2,267.0 905.2,266.6 913.3,266.2 921.4,265.8 929.5,265.3 937.6,264.9 945.7,264.4 953.8,264.0 961.9,263.5 970.0,263.0 978.0,262.4 986.1,261.9 994.2,261.4 1002.3,260.8 1010.4,261.4 1018.5,261.9 1026.6,262.4 1034.6,263.0 1042.7,263.5 1050.8,264.0 1058.9,264.4 1067.0,264.9 1075.1,265.3 1083.2,265.8 1091.3,266.2 1099.3,266.6 1107.4,267.0 1115.5,267.4 1123.6,267.8 1131.7,268.1 1139.8,268.5 1147.9,268.9 1156.0,269.2 1164.0,269.6 1172.1,270.0 1180.2,270.3 1188.3,270.7 1196.4,271.1 1204.5,271.4 1212.6,271.8 1220.7,272.1 1228.8,272.4 1236.8,272.8 1244.9,273.0 1253.0,273.3 1261.1,273.5 1269.2,273.7 1277.3,273.9 1285.4,274.1 1293.4,274.2 1301.5,274.4 1309.6,274.5 1317.7,274.6 1325.8,274.7 1333.9,274.8 1342.0,274.9 1350.1,274.9 1358.1,275.0 1366.2,275.1 1374.3,275.1 1382.4,275.2 1390.5,275.2 1393.7,275.2 1398.6,275.2 1406.7,275.2 1414.8,275.3 1422.8,275.3 1429.3,275.3 1430.9,275.3 1439.0,275.3 1447.1,275.3 1455.2,275.3 1462.3,275.3 1463.3,275.9 1471.4,281.2 1479.5,286.5 1487.5,291.8 1490.8,293.9 1495.6,297.1 1503.7,302.3 1511.8,307.6 1519.9,312.9 1528.0,312.3 1536.1,311.7 1544.2,311.2 1545.8,311.1 1552.2,310.6 1560.3,310.0 1568.4,309.4 1571.7,309.2 1576.5,309.6 1584.6,310.3 1591.1,310.8 1592.7,310.9 1600.8,311.6 1608.9,312.3 1616.9,312.9 1620.2,313.2 1625.0,313.6 1633.1,314.3 1641.2,314.9 1649.3,315.6" fill="none" stroke="#222" stroke-width="1"/><polyline points="355.3,315.6 363.4,319.6 371.5,323.6 379.6,327.6 384.4,330.0 387.7,331.6 395.7,335.6 403.8,339.6 411.9,343.6 413.5,344.4 420.0,347.6 428.1,351.5 432.9,353.9 436.2,355.5 444.3,359.5 452.4,363.5 458.8,366.7 460.4,367.5 468.5,371.5 476.6,375.5 484.7,379.5 492.8,377.7 500.9,375.9 509.0,374.1 513.8,373.1 517.0,372.4 525.1,370.6 533.2,368.8 541.3,367.0 542.3,366.8 549.4,368.9 557.5,371.2 565.6,373.5 573.7,375.9 575.3,376.3 581.8,378.2 589.8,380.5 597.9,382.8 606.0,385.1 610.9,386.4 614.1,387.3 622.2,389.5 630.3,391.7 638.4,393.8 646.5,395.9 654.5,398.0 662.6,400.1 670.7,402.1 678.8,403.9 686.9,405.6 695.0,407.2 703.1,408.7 711.2,410.1 719.2,411.5 727.3,412.8 735.4,414.2 743.5,415.4 751.6,416.7 759.7,417.8 767.8,419.0 775.9,420.0 783.9,421.0 792.0,421.9 800.1,422.9 808.2,423.7 816.3,424.6 824.4,425.3 832.5,426.0 840.5,426.7 848.6,427.3 856.7,427.9 864.8,428.5 872.9,429.1 881.0,429.6 889.1,430.0 897.2,430.4 905.2,430.6 913.3,430.8 921.4,430.9 929.5,431.1 937.6,431.1 945.7,431.0 953.8,430.7 961.9,430.5 970.0,430.2 978.0,429.8 986.1,429.3 994.2,428.9 1002.3,428.6 1010.4,428.9 1018.5,429.3 1026.6,429.8 1034.6,430.2 1042.7,430.5 1050.8,430.7 1058.9,431.0 1067.0,431.1 1075.1,431.1 1083.2,430.9 1091.3,430.8 1099.3,430.6 1107.4,430.4 1115.5,430.0 1123.6,429.6 1131.7,429.1 1139.8,428.5 1147.9,427.9 1156.0,427.3 1164.0,426.7 1172.1,426.0 1180.2,425.3 1188.3,424.6 1196.4,423.7 1204.5,422.9 1212.6,421.9 1220.7,421.0 1228.8,420.0 1236.8,419.0 1244.9,417.8 1253.0,416.7 1261.1,415.4 1269.2,414.2 1277.3,412.8 1285.4,411.5 1293.4,410.1 1301.5,408.7 1309.6,407.2 1317.7,405.6 1325.8,403.9 1333.9,402.1 1342.0,400.1 1350.1,398.0 1358.1,395.9 1366.2,393.8 1374.3,391.7 1382.4,389.5 1390.5,387.3 1393.7,386.4 1398.6,385.1 1406.7,382.8 1414.8,380.5 1422.8,378.2 1429.3,376.3 1430.9,375.9 1439.0,373.5 1447.1,371.2 1455.2,368.9 1462.3,366.8 1463.3,367.0 1471.4,368.8 1479.5,370.6 1487.5,372.4 1490.8,373.1 1495.6,374.1 1503.7,375.9 1511.8,377.7 1519.9,379.5 1528.0,375.5 1536.1,371.5 1544.2,367.5 1545.8,366.7 1552.2,363.5 1560.3,359.5 1568.4,355.5 1571.7,353.9 1576.5,351.5 1584.6,347.6 1591.1,344.4 1592.7,343.6 1600.8,339.6 1608.9,335.6 1616.9,331.6 1620.2,330.0 1625.0,327.6 1633.1,323.6 1641.2,319.6 1649.3,315.6" fill="none" stroke="#222" stroke-width="1"/><polyline points="355.3,315.6 363.4,315.1 371.5,314.6 379.6,314.0 384.4,313.7 387.7,313.5 395.7,313.0 403.8,312.5 411.9,312.0 413.5,311.9 420.0,311.4 428.1,310.9 432.9,310.6 436.2,310.7 444.3,311.1 452.4,311.5 458.8,311.8 460.4,311.8 468.5,312.2 476.6,312.5 484.7,312.9 492.8,312.7 500.9,312.5 509.0,312.3 513.8,312.1 517.0,312.0 525.1,311.8 533.2,311.6 541.3,311.4 542.3,311.4 549.4,311.2 557.5,311.0 565.6,310.7 573.7,310.5 575.3,310.5 581.8,310.3 589.8,310.1 597.9,309.9 606.0,309.7 610.9,309.5 614.1,309.4 622.2,309.2 630.3,309.0 638.4,308.8 646.5,308.6 654.5,308.4 662.6,308.2 670.7,307.9 678.8,307.7 686.9,307.5 695.0,307.3 703.1,307.1 711.2,306.9 719.2,306.7 727.3,306.4 735.4,306.2 743.5,306.0 751.6,305.8 759.7,305.6 767.8,305.4 775.9,305.2 783.9,304.9 792.0,304.7 800.1,304.5 808.2,304.3 816.3,304.1 824.4,303.9 832.5,303.7 840.5,303.5 848.6,303.3 856.7,303.1 864.8,302.8 872.9,302.6 881.0,302.4 889.1,302.2 897.2,302.0 905.2,301.8 913.3,301.6 921.4,301.5 929.5,301.3 937.6,301.1 945.7,300.9 953.8,300.8 961.9,300.6 970.0,300.5 978.0,300.4 986.1,300.3 994.2,300.2 1002.3,300.2 1010.4,300.2 1018.5,300.3 1026.6,300.4 1034.6,300.5 1042.7,300.6 1050.8,300.8 1058.9,300.9 1067.0,301.1 1075.1,301.3 1083.2,301.5 1091.3,301.6 1099.3,301.8 1107.4,302.0 1115.5,302.2 1123.6,302.4 1131.7,302.6 1139.8,302.8 1147.9,303.1 1156.0,303.3 1164.0,303.5 1172.1,303.7 1180.2,303.9 1188.3,304.1 1196.4,304.3 1204.5,304.5 1212.6,304.7 1220.7,304.9 1228.8,305.2 1236.8,305.4 1244.9,305.6 1253.0,305.8 1261.1,306.0 1269.2,306.2 1277.3,306.4 1285.4,306.7 1293.4,306.9 1301.5,307.1 1309.6,307.3 1317.7,307.5 1325.8,307.7 1333.9,307.9 1342.0,308.2 1350.1,308.4 1358.1,308.6 1366.2,308.8 1374.3,309.0 1382.4,309.2 1390.5,309.4 1393.7,309.5 1398.6,309.7 1406.7,309.9 1414.8,310.1 1422.8,310.3 1429.3,310.5 1430.9,310.5 1439.0,310.7 1447.1,311.0 1455.2,311.2 1462.3,311.4 1463.3,311.4 1471.4,311.6 1479.5,311.8 1487.5,312.0 1490.8,312.1 1495.6,312.3 1503.7,312.5 1511.8,312.7 1519.9,312.9 1528.0,312.5 1536.1,312.2 1544.2,311.8 1545.8,311.8 1552.2,311.5 1560.3,311.1 1568.4,310.7 1571.7,310.6 1576.5,310.9 1584.6,311.4 1591.1,311.9 1592.7,312.0 1600.8,312.5 1608.9,313.0 1616.9,313.5 1620.2,313.7 1625.0,314.0 1633.1,314.6 1641.2,315.1 1649.3,315.6" fill="none" stroke="#2a3a44" stroke-width=".9"/><path d="M355.3 341.2 H1649.3" stroke="#111" stroke-width="1.1"/><rect x="342.4" y="328.3" width="26" height="26" fill="none" stroke="#108a10" stroke-width="1.1"/><path d="M329.4 323.7 V360 M329.4 341.2 H355.3" stroke="#f01010" stroke-width="1.1" fill="none"/><path d="M355.3 341.2 V367 M337.3 367 H374.2" stroke="#1010f0" stroke-width="1.1" fill="none"/><path d="M1623.3999999999999 323.7 V360 M1623.3999999999999 341.2 H1649.3" stroke="#f01010" stroke-width="1.1" fill="none"/><path d="M1649.3 341.2 V367 M1631.3 367 H1668.2" stroke="#1010f0" stroke-width="1.1" fill="none"/><circle cx="355.3" cy="341.2" r="2.2" fill="#1010f0"/><circle cx="1002.3" cy="341.2" r="2.2" fill="#1010f0"/><circle cx="1649.3" cy="341.2" r="2.2" fill="#1010f0"/><text x="675" y="339" font-size="12.5" fill="#f01818">1</text><text x="1321.5" y="339" font-size="12.5" fill="#f01818">2</text><text transform="translate(1000.2 260.3) rotate(-90)" font-size="11" fill="#111">-352,6</text><text transform="translate(1013.3 260.3) rotate(-90)" font-size="11" fill="#111">-352,6</text><text transform="translate(951.6 463.3) rotate(-90)" font-size="11" fill="#111">1151,8</text><text transform="translate(1061.4 463.3) rotate(-90)" font-size="11" fill="#111">1151,8</text><path d="M352 535.5 H1652.6 M352 558.5 H1652.6" stroke="#222" stroke-width="1" fill="none"/><path d="M355.3 501.4V563M953.8 501.4V541.5M1002.3 501.4V541.5M1050.8 501.4V541.5M1649.3 501.4V563" stroke="#333" stroke-width=".9" fill="none"/><path d="M351.7 539.2L358.9 531.6M950.2 539.2L957.4 531.6M998.7 539.2L1005.9 531.6M1047.2 539.2L1054.4 531.6M1645.7 539.2L1652.9 531.6M351.7 561.9L358.9 554.3M1645.7 561.9L1652.9 554.3" stroke="#111" stroke-width="1.5" fill="none"/><text x="654.5" y="531" font-size="11" fill="#f80808" stroke="#f80808" stroke-width=".25" text-anchor="middle">9,25</text><text x="978.1" y="531" font-size="11" fill="#f80808" stroke="#f80808" stroke-width=".25" text-anchor="middle">0,75</text><text x="1026.6" y="531" font-size="11" fill="#f80808" stroke="#f80808" stroke-width=".25" text-anchor="middle">0,75</text><text x="1350" y="531" font-size="11" fill="#f80808" stroke="#f80808" stroke-width=".25" text-anchor="middle">9,25</text><text x="1002.3" y="554" font-size="11" fill="#f80808" stroke="#f80808" stroke-width=".25" text-anchor="middle">20,00</text><path d="M179.9 590 V560.5 M176.8 573.5 L179.9 560.3 L183 573.5" stroke="#1010f0" stroke-width="1" fill="none"/><path d="M179.9 590 H209.5 M196.3 587 L210 590 L196.3 593.2" stroke="#f01010" stroke-width="1" fill="none"/><text x="184.4" y="561.4" font-size="11.5" fill="#1010f0">Z</text><text x="210.2" y="585.7" font-size="11.5" fill="#f01010">X</text></svg>
<div class="abs" style="left:165px;top:608px;width:35px;height:23px;background:linear-gradient(180deg,#fff,#f6f6f6);border:1px solid #8e8e8e;border-bottom:none;border-radius:3px 3px 0 0"></div>
<div class="t" style="left:170.7px;top:613.5px;color:#111;letter-spacing:-.6px">Data</div>
<div class="abs" style="left:165px;top:630px;width:1751px;height:406px;background:#f8f8f8;border:1px solid #8a8a8a;border-top-color:#9a9a9a;border-left-color:#9c9c9c;border-radius:0 2px 2px 2px"></div>
<div class="abs" style="left:169px;top:635px;width:1742px;height:396px;background:#fff;border:1px solid #868686"></div>
<div class="abs" style="left:166px;top:630px;width:33px;height:2px;background:#f8f8f8"></div>
<div class="abs" style="left:169px;top:635px;width:884px;height:265px;background:#fff;border:1px solid #868686"></div>
<div class="abs" style="left:171px;top:637px;width:2px;height:262px;border-left:1px solid #9a9a9a;border-right:1px solid #9a9a9a"></div>
<div class="abs" style="left:173px;top:637px;width:862px;height:26px;background:linear-gradient(180deg,#6c6c6c 0,#8a8a8a 8%,#777 30%,#5a5a5a 42%,#141414 46%,#1a1a1a 60%,#333 85%,#555 100%)"></div>
<svg class="abs" style="left:173px;top:637px" width="862" height="262" viewBox="173 637 862 262"><path d="M240.5 638 V663" stroke="#8a8a8a" stroke-width="1"/><path d="M241.5 638 V663" stroke="#2a2a2a" stroke-width="1"/><g transform="translate(226.2 645)"><path d="M0.3 0.3 h10.6 l-3.6 3.6 l.8 7 l-3.2-1.6 l-.6-5.4z" fill="#f2f2f2" stroke="#1a1a1a" stroke-width=".6"/></g><path d="M300.5 638 V663" stroke="#8a8a8a" stroke-width="1"/><path d="M301.5 638 V663" stroke="#2a2a2a" stroke-width="1"/><g transform="translate(286.2 645)"><path d="M0.3 0.3 h10.6 l-3.6 3.6 l.8 7 l-3.2-1.6 l-.6-5.4z" fill="#f2f2f2" stroke="#1a1a1a" stroke-width=".6"/></g><path d="M420.5 638 V663" stroke="#8a8a8a" stroke-width="1"/><path d="M421.5 638 V663" stroke="#2a2a2a" stroke-width="1"/><path d="M490.5 638 V663" stroke="#8a8a8a" stroke-width="1"/><path d="M491.5 638 V663" stroke="#2a2a2a" stroke-width="1"/><g transform="translate(476.2 645)"><path d="M0.3 0.3 h10.6 l-3.6 3.6 l.8 7 l-3.2-1.6 l-.6-5.4z" fill="#f2f2f2" stroke="#1a1a1a" stroke-width=".6"/></g><path d="M560.5 638 V663" stroke="#8a8a8a" stroke-width="1"/><path d="M561.5 638 V663" stroke="#2a2a2a" stroke-width="1"/><g transform="translate(546.2 645)"><path d="M0.3 0.3 h10.6 l-3.6 3.6 l.8 7 l-3.2-1.6 l-.6-5.4z" fill="#f2f2f2" stroke="#1a1a1a" stroke-width=".6"/></g><path d="M630.5 638 V663" stroke="#8a8a8a" stroke-width="1"/><path d="M631.5 638 V663" stroke="#2a2a2a" stroke-width="1"/><g transform="translate(616.2 645)"><path d="M0.3 0.3 h10.6 l-3.6 3.6 l.8 7 l-3.2-1.6 l-.6-5.4z" fill="#f2f2f2" stroke="#1a1a1a" stroke-width=".6"/></g><path d="M700.5 638 V663" stroke="#8a8a8a" stroke-width="1"/><path d="M701.5 638 V663" stroke="#2a2a2a" stroke-width="1"/><g transform="translate(686.2 645)"><path d="M0.3 0.3 h10.6 l-3.6 3.6 l.8 7 l-3.2-1.6 l-.6-5.4z" fill="#f2f2f2" stroke="#1a1a1a" stroke-width=".6"/></g><path d="M770.5 638 V663" stroke="#8a8a8a" stroke-width="1"/><path d="M771.5 638 V663" stroke="#2a2a2a" stroke-width="1"/><g transform="translate(756.2 645)"><path d="M0.3 0.3 h10.6 l-3.6 3.6 l.8 7 l-3.2-1.6 l-.6-5.4z" fill="#f2f2f2" stroke="#1a1a1a" stroke-width=".6"/></g><path d="M840.5 638 V663" stroke="#8a8a8a" stroke-width="1"/><path d="M841.5 638 V663" stroke="#2a2a2a" stroke-width="1"/><g transform="translate(826.2 645)"><path d="M0.3 0.3 h10.6 l-3.6 3.6 l.8 7 l-3.2-1.6 l-.6-5.4z" fill="#f2f2f2" stroke="#1a1a1a" stroke-width=".6"/></g><path d="M173 688.5H1035M173 713.5H1035M173 738.5H1035M173 763.5H1035M173 788.5H1035M173 813.5H1035M173 838.5H1035M173 863.5H1035M173 888.5H1035M241.5 663V899M301.5 663V899M421.5 663V899M491.5 663V899M561.5 663V899M631.5 663V899M701.5 663V899M771.5 663V899M841.5 663V899" stroke="#c8c8c8" stroke-width="1" fill="none"/></svg>
<div class="t" style="left:177.5px;top:643.4px;color:#fff;font-size:11px;letter-spacing:.38px">Member</div>
<div class="t" style="left:247px;top:643.4px;color:#fff;font-size:11px;letter-spacing:.2px">Dx</div>
<div class="t" style="left:307px;top:643.4px;color:#fff;font-size:11px;letter-spacing:.47px">Combination</div>
<div class="t" style="left:427px;top:643.4px;color:#fff;font-size:11px;letter-spacing:0">N[kN]</div>
<div class="t" style="left:497px;top:643.4px;color:#fff;font-size:11px;letter-spacing:0">Vy[kN]</div>
<div class="t" style="left:567px;top:643.4px;color:#fff;font-size:11px;letter-spacing:0">Vz[kN]</div>
<div class="t" style="left:637px;top:643.4px;color:#fff;font-size:11px;letter-spacing:0">Mx[kNm]</div>
<div class="t" style="left:707px;top:643.4px;color:#fff;font-size:11px;letter-spacing:0">My[kNm]</div>
<div class="t" style="left:777px;top:643.4px;color:#fff;font-size:11px;letter-spacing:0">Mz[kNm]</div>
<div class="abs" style="left:173px;top:663px;width:862px;height:236px;overflow:hidden">
<div class="t" style="left:4.7px;top:6.6px;color:#111;font-size:11px;letter-spacing:-.12px;word-spacing:0">1</div><div class="t" style="left:68px;top:6.6px;width:58px;text-align:right;color:#111;font-size:11px;letter-spacing:-.2px">9,00</div><div class="t" style="left:134px;top:6.6px;color:#111;font-size:11px;letter-spacing:-.7px;word-spacing:1.2px">ULSF ST(2)(2)</div><div class="t" style="left:254px;top:6.6px;color:#111;font-size:11px;letter-spacing:-.15px;word-spacing:0"><b>-1215,1</b></div><div class="t" style="left:324px;top:6.6px;color:#111;font-size:11px;letter-spacing:-.12px;word-spacing:0">0,0</div><div class="t" style="left:394px;top:6.6px;color:#111;font-size:11px;letter-spacing:-.12px;word-spacing:0">-20,6</div><div class="t" style="left:464px;top:6.6px;color:#111;font-size:11px;letter-spacing:-.12px;word-spacing:0">0,0</div><div class="t" style="left:534px;top:6.6px;color:#111;font-size:11px;letter-spacing:-.12px;word-spacing:0">-103,9</div><div class="t" style="left:604px;top:6.6px;color:#111;font-size:11px;letter-spacing:-.15px;word-spacing:0"><b>0,0</b></div>
<div class="t" style="left:4.7px;top:31.6px;color:#111;font-size:11px;letter-spacing:-.12px;word-spacing:0">1</div><div class="t" style="left:68px;top:31.6px;width:58px;text-align:right;color:#111;font-size:11px;letter-spacing:-.2px">0,00</div><div class="t" style="left:134px;top:31.6px;color:#111;font-size:11px;letter-spacing:-.7px;word-spacing:1.2px">ULSF ST(7)(40)</div><div class="t" style="left:254px;top:31.6px;color:#111;font-size:11px;letter-spacing:-.15px;word-spacing:0"><b>1,0</b></div><div class="t" style="left:324px;top:31.6px;color:#111;font-size:11px;letter-spacing:-.12px;word-spacing:0">0,0</div><div class="t" style="left:394px;top:31.6px;color:#111;font-size:11px;letter-spacing:-.12px;word-spacing:0">300,6</div><div class="t" style="left:464px;top:31.6px;color:#111;font-size:11px;letter-spacing:-.12px;word-spacing:0">-0,1</div><div class="t" style="left:534px;top:31.6px;color:#111;font-size:11px;letter-spacing:-.12px;word-spacing:0">-0,2</div><div class="t" style="left:604px;top:31.6px;color:#111;font-size:11px;letter-spacing:-.12px;word-spacing:0">0,0</div>
<div class="t" style="left:4.7px;top:56.6px;color:#111;font-size:11px;letter-spacing:-.12px;word-spacing:0">1</div><div class="t" style="left:68px;top:56.6px;width:58px;text-align:right;color:#111;font-size:11px;letter-spacing:-.2px">0,00</div><div class="t" style="left:134px;top:56.6px;color:#111;font-size:11px;letter-spacing:-.7px;word-spacing:1.2px">ULSF ST(7)(39)</div><div class="t" style="left:254px;top:56.6px;color:#111;font-size:11px;letter-spacing:-.12px;word-spacing:0">-5,9</div><div class="t" style="left:324px;top:56.6px;color:#111;font-size:11px;letter-spacing:-.15px;word-spacing:0"><b>0,0</b></div><div class="t" style="left:394px;top:56.6px;color:#111;font-size:11px;letter-spacing:-.12px;word-spacing:0">195,8</div><div class="t" style="left:464px;top:56.6px;color:#111;font-size:11px;letter-spacing:-.12px;word-spacing:0">-0,2</div><div class="t" style="left:534px;top:56.6px;color:#111;font-size:11px;letter-spacing:-.12px;word-spacing:0">-0,4</div><div class="t" style="left:604px;top:56.6px;color:#111;font-size:11px;letter-spacing:-.12px;word-spacing:0">0,0</div>
<div class="t" style="left:4.7px;top:81.6px;color:#111;font-size:11px;letter-spacing:-.12px;word-spacing:0">1</div><div class="t" style="left:68px;top:81.6px;width:58px;text-align:right;color:#111;font-size:11px;letter-spacing:-.2px">1,20</div><div class="t" style="left:134px;top:81.6px;color:#111;font-size:11px;letter-spacing:-.7px;word-spacing:1.2px">ULSF ST(3)(7)</div><div class="t" style="left:254px;top:81.6px;color:#111;font-size:11px;letter-spacing:-.12px;word-spacing:0">-203,4</div><div class="t" style="left:324px;top:81.6px;color:#111;font-size:11px;letter-spacing:-.12px;word-spacing:0">0,0</div><div class="t" style="left:394px;top:81.6px;color:#111;font-size:11px;letter-spacing:-.15px;word-spacing:0"><b>-35,6</b></div><div class="t" style="left:464px;top:81.6px;color:#111;font-size:11px;letter-spacing:-.12px;word-spacing:0">0,0</div><div class="t" style="left:534px;top:81.6px;color:#111;font-size:11px;letter-spacing:-.12px;word-spacing:0">-38,4</div><div class="t" style="left:604px;top:81.6px;color:#111;font-size:11px;letter-spacing:-.12px;word-spacing:0">0,0</div>
<div class="t" style="left:4.7px;top:106.6px;color:#111;font-size:11px;letter-spacing:-.12px;word-spacing:0">1</div><div class="t" style="left:68px;top:106.6px;width:58px;text-align:right;color:#111;font-size:11px;letter-spacing:-.2px">0,00</div><div class="t" style="left:134px;top:106.6px;color:#111;font-size:11px;letter-spacing:-.7px;word-spacing:1.2px">ULSF ST(7)(44)</div><div class="t" style="left:254px;top:106.6px;color:#111;font-size:11px;letter-spacing:-.12px;word-spacing:0">-0,2</div><div class="t" style="left:324px;top:106.6px;color:#111;font-size:11px;letter-spacing:-.12px;word-spacing:0">0,0</div><div class="t" style="left:394px;top:106.6px;color:#111;font-size:11px;letter-spacing:-.15px;word-spacing:0"><b>339,3</b></div><div class="t" style="left:464px;top:106.6px;color:#111;font-size:11px;letter-spacing:-.12px;word-spacing:0">-0,2</div><div class="t" style="left:534px;top:106.6px;color:#111;font-size:11px;letter-spacing:-.12px;word-spacing:0">-0,3</div><div class="t" style="left:604px;top:106.6px;color:#111;font-size:11px;letter-spacing:-.12px;word-spacing:0">0,0</div>
<div class="t" style="left:4.7px;top:131.6px;color:#111;font-size:11px;letter-spacing:-.12px;word-spacing:0">1</div><div class="t" style="left:68px;top:131.6px;width:58px;text-align:right;color:#111;font-size:11px;letter-spacing:-.2px">2,00</div><div class="t" style="left:134px;top:131.6px;color:#111;font-size:11px;letter-spacing:-.7px;word-spacing:1.2px">ULSF ST(7)(51)</div><div class="t" style="left:254px;top:131.6px;color:#111;font-size:11px;letter-spacing:-.12px;word-spacing:0">-188,2</div><div class="t" style="left:324px;top:131.6px;color:#111;font-size:11px;letter-spacing:-.12px;word-spacing:0">0,0</div><div class="t" style="left:394px;top:131.6px;color:#111;font-size:11px;letter-spacing:-.12px;word-spacing:0">98,8</div><div class="t" style="left:464px;top:131.6px;color:#111;font-size:11px;letter-spacing:-.15px;word-spacing:0"><b>-0,2</b></div><div class="t" style="left:534px;top:131.6px;color:#111;font-size:11px;letter-spacing:-.12px;word-spacing:0">222,7</div><div class="t" style="left:604px;top:131.6px;color:#111;font-size:11px;letter-spacing:-.12px;word-spacing:0">0,0</div>
<div class="t" style="left:4.7px;top:156.6px;color:#111;font-size:11px;letter-spacing:-.12px;word-spacing:0">1</div><div class="t" style="left:68px;top:156.6px;width:58px;text-align:right;color:#111;font-size:11px;letter-spacing:-.2px">0,00</div><div class="t" style="left:134px;top:156.6px;color:#111;font-size:11px;letter-spacing:-.7px;word-spacing:1.2px">ULSF ST(2)(2)</div><div class="t" style="left:254px;top:156.6px;color:#111;font-size:11px;letter-spacing:-.12px;word-spacing:0">-3,0</div><div class="t" style="left:324px;top:156.6px;color:#111;font-size:11px;letter-spacing:-.12px;word-spacing:0">0,0</div><div class="t" style="left:394px;top:156.6px;color:#111;font-size:11px;letter-spacing:-.12px;word-spacing:0">91,2</div><div class="t" style="left:464px;top:156.6px;color:#111;font-size:11px;letter-spacing:-.15px;word-spacing:0"><b>0,0</b></div><div class="t" style="left:534px;top:156.6px;color:#111;font-size:11px;letter-spacing:-.12px;word-spacing:0">-0,2</div><div class="t" style="left:604px;top:156.6px;color:#111;font-size:11px;letter-spacing:-.12px;word-spacing:0">0,0</div>
<div class="t" style="left:4.7px;top:181.6px;color:#111;font-size:11px;letter-spacing:-.12px;word-spacing:0">1</div><div class="t" style="left:68px;top:181.6px;width:58px;text-align:right;color:#111;font-size:11px;letter-spacing:-.2px">10,00</div><div class="t" style="left:134px;top:181.6px;color:#111;font-size:11px;letter-spacing:-.7px;word-spacing:1.2px">ULSF ST(3)(7)</div><div class="t" style="left:254px;top:181.6px;color:#111;font-size:11px;letter-spacing:-.12px;word-spacing:0">-1192,3</div><div class="t" style="left:324px;top:181.6px;color:#111;font-size:11px;letter-spacing:-.12px;word-spacing:0">0,0</div><div class="t" style="left:394px;top:181.6px;color:#111;font-size:11px;letter-spacing:-.12px;word-spacing:0">-31,2</div><div class="t" style="left:464px;top:181.6px;color:#111;font-size:11px;letter-spacing:-.12px;word-spacing:0">-0,1</div><div class="t" style="left:534px;top:181.6px;color:#111;font-size:11px;letter-spacing:-.15px;word-spacing:0"><b>-352,6</b></div><div class="t" style="left:604px;top:181.6px;color:#111;font-size:11px;letter-spacing:-.12px;word-spacing:0">0,0</div>
<div class="t" style="left:4.7px;top:206.6px;color:#111;font-size:11px;letter-spacing:-.12px;word-spacing:0">1</div><div class="t" style="left:68px;top:206.6px;width:58px;text-align:right;color:#111;font-size:11px;letter-spacing:-.2px">9,25</div><div class="t" style="left:134px;top:206.6px;color:#111;font-size:11px;letter-spacing:-.7px;word-spacing:1.2px">ULSF ST(7)(44)</div><div class="t" style="left:254px;top:206.6px;color:#111;font-size:11px;letter-spacing:-.12px;word-spacing:0">-1069,5</div><div class="t" style="left:324px;top:206.6px;color:#111;font-size:11px;letter-spacing:-.12px;word-spacing:0">0,0</div><div class="t" style="left:394px;top:206.6px;color:#111;font-size:11px;letter-spacing:-.12px;word-spacing:0">-5,5</div><div class="t" style="left:464px;top:206.6px;color:#111;font-size:11px;letter-spacing:-.12px;word-spacing:0">-0,1</div><div class="t" style="left:534px;top:206.6px;color:#111;font-size:11px;letter-spacing:-.15px;word-spacing:0"><b>1151,8</b></div><div class="t" style="left:604px;top:206.6px;color:#111;font-size:11px;letter-spacing:-.12px;word-spacing:0">0,0</div>
<div class="t" style="left:4.7px;top:230.6px;color:#111;font-size:11px;letter-spacing:-.12px;word-spacing:0">1</div><div class="t" style="left:68px;top:230.6px;width:58px;text-align:right;color:#111;font-size:11px;letter-spacing:-.2px">1,20</div><div class="t" style="left:134px;top:230.6px;color:#111;font-size:11px;letter-spacing:-.7px;word-spacing:1.2px">ULSF ST(7)(46)</div><div class="t" style="left:254px;top:230.6px;color:#111;font-size:11px;letter-spacing:-.12px;word-spacing:0">-199,7</div><div class="t" style="left:324px;top:230.6px;color:#111;font-size:11px;letter-spacing:-.12px;word-spacing:0">0,0</div><div class="t" style="left:394px;top:230.6px;color:#111;font-size:11px;letter-spacing:-.12px;word-spacing:0">171,7</div><div class="t" style="left:464px;top:230.6px;color:#111;font-size:11px;letter-spacing:-.12px;word-spacing:0">-0,2</div><div class="t" style="left:534px;top:230.6px;color:#111;font-size:11px;letter-spacing:-.12px;word-spacing:0">213,0</div><div class="t" style="left:604px;top:230.6px;color:#111;font-size:11px;letter-spacing:-.12px;word-spacing:0">0,0</div>
</div>
<div class="abs" style="left:1035px;top:637px;width:17px;height:262px;background:#f0f0f0"></div>
<div class="abs" style="left:1036px;top:638px;width:15px;height:16px;background:linear-gradient(90deg,#f6f6f6,#d8d8d8);border:1px solid #a9b6c8;border-radius:2px"></div>
<div class="abs" style="left:1036px;top:882px;width:15px;height:16px;background:linear-gradient(90deg,#f6f6f6,#d8d8d8);border:1px solid #a9b6c8;border-radius:2px"></div>
<div class="abs" style="left:1036px;top:655px;width:15px;height:106px;background:linear-gradient(90deg,#f0f0f0,#cfcfcf);border:1px solid #b0b4ba;border-radius:2px"></div>
<svg class="abs" style="left:1036px;top:637px" width="15" height="262" viewBox="0 0 15 262"><path d="M4 11 h7 l-3.5-4.2z M4 251 h7 l-3.5 4.2z" fill="#333"/></svg>
<div class="abs" style="left:169px;top:906px;width:885px;height:5px;background:#f2f2f2"></div>
<div class="abs" style="left:169px;top:915px;width:884px;height:116px;background:#fff;border:1px solid #8e8e8e"></div>
<div class="abs" style="left:173px;top:918px;width:860px;height:26px;background:linear-gradient(180deg,#6c6c6c 0,#8a8a8a 8%,#777 30%,#5a5a5a 42%,#141414 46%,#1a1a1a 60%,#333 85%,#555 100%)"></div>
<svg class="abs" style="left:173px;top:918px" width="862" height="112" viewBox="173 918 862 112"><path d="M240.5 919 V944" stroke="#8a8a8a" stroke-width="1"/><path d="M241.5 919 V944" stroke="#2a2a2a" stroke-width="1"/><path d="M173 968.5H1033M173 993.5H1033M173 1018.5H1033M241.5 944V1030" stroke="#c8c8c8" stroke-width="1" fill="none"/></svg>
<div class="t" style="left:177px;top:923.6px;width:63px;overflow:hidden;color:#fff;font-size:11px;letter-spacing:.47px">Combination</div>
<div class="t" style="left:247px;top:923.6px;color:#fff;font-size:11px;letter-spacing:.33px">Critical load effect description</div>
<div class="t" style="left:177px;top:950.1px;width:63px;overflow:hidden;color:#111;font-size:11px;letter-spacing:-.7px;word-spacing:1.2px">ULSF ST(2)(2)</div><div class="t" style="left:247px;top:950.1px;color:#111;font-size:11px;letter-spacing:-.12px">1,35*SW (1) + R (2) + 1,35*G (2) + PRE (2)</div>
<div class="t" style="left:177px;top:975.1px;width:63px;overflow:hidden;color:#111;font-size:11px;letter-spacing:-.7px;word-spacing:1.2px">ULSF ST(7)(40)</div><div class="t" style="left:247px;top:975.1px;color:#111;font-size:11px;letter-spacing:-.12px">SW (1) + R (2) + G (2) + PRE (2) + R (3) + 1,15*G (3) + R (4) + 1,15*G (4) + R (5) + G (5) + R (6) + G (6) + 1,05*LC3 + 1,5*LC4 + R (7) + 1,15*G (7)</div>
<div class="t" style="left:177px;top:1000.1px;width:63px;overflow:hidden;color:#111;font-size:11px;letter-spacing:-.7px;word-spacing:1.2px">ULSF ST(7)(39)</div><div class="t" style="left:247px;top:1000.1px;color:#111;font-size:11px;letter-spacing:-.12px">1,35*SW (1) + R (2) + 1,35*G (2) + PRE (2) + R (3) + G (3) + R (4) + G (4) + R (5) + 1,35*G (5) + R (6) + 1,35*G (6) + R (7) + G (7)</div>
<div class="abs" style="left:1033px;top:918px;width:3px;height:112px;background:#f0f0f0"></div>
<div class="abs" style="left:1035px;top:918px;width:17px;height:112px;background:#f0f0f0"></div>
<div class="abs" style="left:1036px;top:919px;width:15px;height:16px;background:linear-gradient(90deg,#f6f6f6,#d8d8d8);border:1px solid #a9b6c8;border-radius:2px"></div>
<div class="abs" style="left:1036px;top:1013px;width:15px;height:16px;background:linear-gradient(90deg,#f6f6f6,#d8d8d8);border:1px solid #a9b6c8;border-radius:2px"></div>
<div class="abs" style="left:1036px;top:935.5px;width:15px;height:31.0px;background:linear-gradient(90deg,#f0f0f0,#cfcfcf);border:1px solid #b0b4ba;border-radius:2px"></div>
<svg class="abs" style="left:1036px;top:918px" width="15" height="112" viewBox="0 0 15 112"><path d="M4 11 h7 l-3.5-4.2z M4 101 h7 l-3.5 4.2z" fill="#333"/></svg>
<svg class="abs" style="left:0;top:0;pointer-events:none" width="1920" height="1041" viewBox="0 0 1920 1041" fill="none" stroke="#ff0000" stroke-linecap="butt"><rect x="635.4" y="35.4" width="164.3" height="93.2" rx="8" stroke-width="4.2"/><rect x="45.5" y="680.5" width="110" height="25" rx="6.5" stroke-width="3.6"/><rect x="172" y="915" width="883" height="116" rx="8" stroke-width="4"/><path d="M107.4 678.7C108.7 674.4 112.7 661.7 115.2 653.2C117.7 644.6 120.1 636.0 122.5 627.3C124.9 618.7 127.2 610.0 129.6 601.3C131.9 592.6 134.2 583.9 136.6 575.2C138.9 566.5 141.3 557.7 143.8 549.0C146.2 540.3 148.7 531.6 151.4 522.9C154.0 514.3 156.8 505.6 159.7 497.1C162.7 488.6 165.7 480.1 169.1 471.7C172.4 463.4 176.0 455.1 179.8 447.0C183.6 438.9 187.6 430.9 191.9 423.0C196.2 415.2 200.7 407.4 205.4 399.9C210.2 392.3 215.1 384.8 220.3 377.6C225.5 370.3 230.9 363.2 236.5 356.2C242.0 349.2 247.8 342.4 253.8 335.8C259.8 329.2 266.0 322.7 272.3 316.4C278.7 310.2 285.2 304.1 291.9 298.2C298.6 292.3 305.5 286.6 312.5 281.0C319.6 275.4 326.7 270.1 334.0 264.8C341.3 259.5 348.7 254.4 356.2 249.4C363.7 244.4 371.3 239.5 378.9 234.7C386.5 229.8 394.2 225.1 401.9 220.3C409.7 215.6 417.4 211.0 425.2 206.3C432.9 201.6 440.7 197.0 448.5 192.4C456.2 187.7 463.9 183.1 471.6 178.4C479.3 173.7 486.9 168.9 494.5 164.1C502.1 159.4 509.6 154.6 517.1 149.8C524.7 145.0 532.2 140.2 539.8 135.4C547.3 130.7 554.9 125.9 562.5 121.3C570.1 116.6 577.8 112.0 585.5 107.5C593.3 102.9 601.1 98.5 609.0 94.1C616.9 89.8 629.0 83.6 633.0 81.5" stroke-width="4.2"/><path d="M801.5 75.8C805.6 77.5 817.7 82.8 825.9 86.1C834.1 89.5 842.5 92.8 850.8 96.1C859.1 99.4 867.5 102.7 875.9 106.2C884.2 109.6 892.6 113.1 900.8 116.8C909.1 120.6 917.3 124.4 925.4 128.6C933.5 132.9 941.5 137.3 949.3 142.1C957.1 146.9 964.8 152.1 972.1 157.6C979.3 163.1 986.4 168.9 992.9 175.1C999.4 181.3 1005.5 187.8 1011.0 194.7C1016.6 201.5 1021.6 208.7 1026.1 216.2C1030.7 223.6 1034.8 231.4 1038.5 239.4C1042.1 247.3 1045.3 255.6 1048.2 263.9C1051.0 272.3 1053.4 280.9 1055.5 289.6C1057.7 298.3 1059.4 307.2 1060.8 316.1C1062.2 325.1 1063.3 334.2 1064.1 343.2C1065.0 352.3 1065.5 361.5 1065.8 370.6C1066.1 379.8 1066.1 388.9 1066.0 398.1C1065.8 407.2 1065.4 416.3 1064.9 425.3C1064.3 434.4 1063.5 443.4 1062.5 452.3C1061.5 461.3 1060.3 470.2 1058.9 479.1C1057.5 488.0 1055.9 496.8 1054.2 505.6C1052.4 514.4 1050.4 523.2 1048.2 531.8C1046.0 540.5 1043.7 549.2 1041.1 557.7C1038.6 566.3 1035.8 574.8 1032.9 583.2C1030.0 591.7 1026.9 600.1 1023.6 608.4C1020.3 616.7 1016.9 624.9 1013.3 633.1C1009.6 641.3 1005.8 649.4 1001.9 657.4C997.9 665.4 993.8 673.3 989.5 681.2C985.2 689.1 980.7 696.8 976.1 704.5C971.5 712.2 966.7 719.9 961.8 727.4C956.9 735.0 951.9 742.4 946.8 749.8C941.6 757.2 936.4 764.6 931.0 771.8C925.7 779.1 920.2 786.3 914.6 793.4C909.1 800.6 903.5 807.7 897.8 814.7C892.1 821.7 886.3 828.7 880.5 835.6C874.7 842.5 868.8 849.3 862.9 856.1C857.0 862.9 851.0 869.7 845.1 876.4C839.1 883.1 833.1 889.7 827.1 896.3C821.1 902.9 812.1 912.8 809.1 916.0" stroke-width="4.2"/><path d="M612.2 81.7 L634.6 81.2 L621.4 99.4" stroke-width="4.2" stroke-linejoin="miter"/><path d="M816 893.6 L808.2 917 L830.7 906.9" stroke-width="4.2" stroke-linejoin="miter"/></svg>
<div class="abs" style="left:0;top:1039px;width:1920px;height:2px;background:linear-gradient(180deg,#6a6a6a,#000 60%)"></div>
<div class="abs" style="left:1917px;top:132px;width:3px;height:906px;background:#b6b6b6"></div>
</body></html>
